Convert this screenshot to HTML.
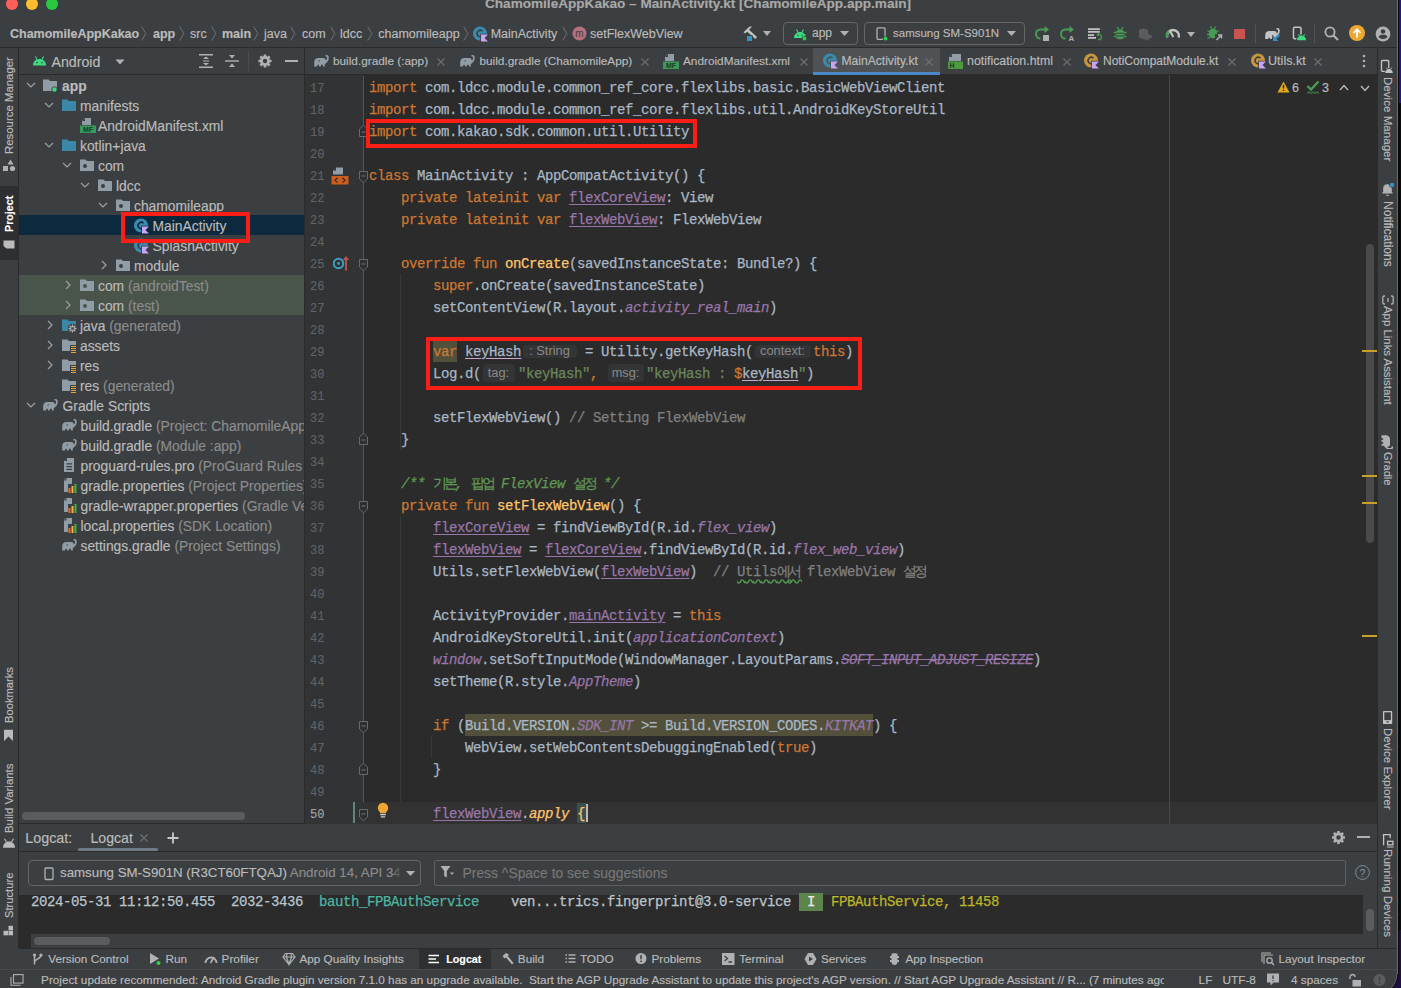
<!DOCTYPE html>
<html><head><meta charset="utf-8"><title>Android Studio</title>
<style>
html,body{margin:0;padding:0;}
body{width:1401px;height:988px;overflow:hidden;position:relative;background:#3C3F41;font-family:'Liberation Sans', sans-serif;-webkit-text-stroke:0.15px currentColor;}
.c span{white-space:pre}
.c x{display:inline-block;width:8px}
.c x.k{width:11px;text-align:center}
.u x{text-decoration:underline;text-underline-offset:2px}
.ul x{text-decoration:underline;text-decoration-color:#C8A8D0;text-underline-offset:2px}
.lt x{text-decoration:line-through}
.wv x{text-decoration:underline wavy #4E9A4E;text-underline-offset:3px}
</style></head><body>
<div style="position:absolute;left:1397px;top:0px;width:1px;height:988px;background:#6B6B6B;"></div><div style="position:absolute;left:1398px;top:0px;width:3px;height:988px;background:#0A0A0C;"></div><div style="position:absolute;left:1399px;top:0px;width:2px;height:103px;background:#2A1480;"></div><div style="position:absolute;left:1399px;top:930px;width:2px;height:58px;background:#1E0E44;"></div><svg style="position:absolute;left:0px;top:0px;" width="70" height="12" viewBox="0 0 70 12"><circle cx="12" cy="4" r="6" fill="#FF5F57"/><circle cx="32" cy="4" r="6" fill="#FEBC2E"/><circle cx="52" cy="4" r="6" fill="#28C840"/></svg><div style="position:absolute;left:485px;top:-6.30px;height:20px;line-height:20px;font-family:'Liberation Sans', sans-serif;font-size:13.58px;font-weight:700;color:#A8A8A8;white-space:pre;">ChamomileAppKakao – MainActivity.kt [ChamomileApp.app.main]</div><div style="position:absolute;left:0px;top:47px;width:1397px;height:1px;background:#2B2B2B;"></div><div style="position:absolute;left:18px;top:48px;width:1px;height:900px;background:#2B2B2B;"></div><div style="position:absolute;left:19px;top:74px;width:285px;height:1px;background:#2B2B2B;"></div><div style="position:absolute;left:304px;top:48px;width:1px;height:776px;background:#2B2B2B;"></div><div style="position:absolute;left:305px;top:74px;width:1072px;height:1px;background:#2B2B2B;"></div><div style="position:absolute;left:305px;top:75px;width:58px;height:749px;background:#313335;"></div><div style="position:absolute;left:363px;top:75px;width:1014px;height:749px;background:#2B2B2B;"></div><div style="position:absolute;left:363px;top:76px;width:1px;height:748px;background:#555555;"></div><div style="position:absolute;left:1169px;top:75px;width:1px;height:749px;background:#474747;"></div><div style="position:absolute;left:1377px;top:48px;width:1px;height:900px;background:#2B2B2B;"></div><div style="position:absolute;left:19px;top:823px;width:285px;height:1px;background:#2B2B2B;"></div><div style="position:absolute;left:19px;top:851px;width:1358px;height:1px;background:#2B2B2B;"></div><div style="position:absolute;left:19px;top:895px;width:1344px;height:39px;background:#2B2B2B;"></div><div style="position:absolute;left:19px;top:934px;width:12px;height:14px;background:#2B2B2B;"></div><div style="position:absolute;left:19px;top:948px;width:1378px;height:1px;background:#2B2B2B;"></div><div style="position:absolute;left:0px;top:969px;width:1397px;height:1px;background:#4A4A4A;"></div><div style="position:absolute;left:305px;top:802px;width:1072px;height:22px;background:#323232;"></div><div style="position:absolute;left:305px;top:802px;width:58px;height:22px;background:#313335;"></div><div style="position:absolute;left:1169px;top:802px;width:1px;height:22px;background:#4A4A4A;"></div><div style="position:absolute;left:433px;top:341px;width:24px;height:21px;background:#52503A;"></div><div style="position:absolute;left:465px;top:714px;width:408px;height:22px;background:#52503A;"></div><div style="position:absolute;left:577px;top:803px;width:9px;height:20px;background:#3B514D;"></div><div style="position:absolute;left:586px;top:804px;width:2px;height:18px;background:#BBBBBB;"></div><div style="position:absolute;left:400px;top:274px;width:1px;height:176px;background:#383838;"></div><div style="position:absolute;left:400px;top:516px;width:1px;height:286px;background:#383838;"></div><div style="position:absolute;left:431px;top:736px;width:1px;height:22px;background:#383838;"></div><div style="position:absolute;left:310px;top:78px;height:22px;line-height:22px;font-family:'Liberation Mono', monospace;font-size:12px;color:#606366;white-space:pre">17</div><div class="c" style="position:absolute;left:369px;top:76.5px;height:22px;line-height:22px;font-family:'Liberation Mono', monospace;font-size:14px;-webkit-text-stroke:0.25px currentColor;color:#A9B7C6;white-space:pre"><span style="color:#CC7832"><x>i</x><x>m</x><x>p</x><x>o</x><x>r</x><x>t</x></span><span style="color:#A9B7C6"><x> </x><x>c</x><x>o</x><x>m</x><x>.</x><x>l</x><x>d</x><x>c</x><x>c</x><x>.</x><x>m</x><x>o</x><x>d</x><x>u</x><x>l</x><x>e</x><x>.</x><x>c</x><x>o</x><x>m</x><x>m</x><x>o</x><x>n</x><x>_</x><x>r</x><x>e</x><x>f</x><x>_</x><x>c</x><x>o</x><x>r</x><x>e</x><x>.</x><x>f</x><x>l</x><x>e</x><x>x</x><x>l</x><x>i</x><x>b</x><x>s</x><x>.</x><x>b</x><x>a</x><x>s</x><x>i</x><x>c</x><x>.</x><x>B</x><x>a</x><x>s</x><x>i</x><x>c</x><x>W</x><x>e</x><x>b</x><x>V</x><x>i</x><x>e</x><x>w</x><x>C</x><x>l</x><x>i</x><x>e</x><x>n</x><x>t</x></span></div><div style="position:absolute;left:310px;top:100px;height:22px;line-height:22px;font-family:'Liberation Mono', monospace;font-size:12px;color:#606366;white-space:pre">18</div><div class="c" style="position:absolute;left:369px;top:98.5px;height:22px;line-height:22px;font-family:'Liberation Mono', monospace;font-size:14px;-webkit-text-stroke:0.25px currentColor;color:#A9B7C6;white-space:pre"><span style="color:#CC7832"><x>i</x><x>m</x><x>p</x><x>o</x><x>r</x><x>t</x></span><span style="color:#A9B7C6"><x> </x><x>c</x><x>o</x><x>m</x><x>.</x><x>l</x><x>d</x><x>c</x><x>c</x><x>.</x><x>m</x><x>o</x><x>d</x><x>u</x><x>l</x><x>e</x><x>.</x><x>c</x><x>o</x><x>m</x><x>m</x><x>o</x><x>n</x><x>_</x><x>r</x><x>e</x><x>f</x><x>_</x><x>c</x><x>o</x><x>r</x><x>e</x><x>.</x><x>f</x><x>l</x><x>e</x><x>x</x><x>l</x><x>i</x><x>b</x><x>s</x><x>.</x><x>u</x><x>t</x><x>i</x><x>l</x><x>.</x><x>A</x><x>n</x><x>d</x><x>r</x><x>o</x><x>i</x><x>d</x><x>K</x><x>e</x><x>y</x><x>S</x><x>t</x><x>o</x><x>r</x><x>e</x><x>U</x><x>t</x><x>i</x><x>l</x></span></div><div style="position:absolute;left:310px;top:122px;height:22px;line-height:22px;font-family:'Liberation Mono', monospace;font-size:12px;color:#606366;white-space:pre">19</div><div class="c" style="position:absolute;left:369px;top:120.5px;height:22px;line-height:22px;font-family:'Liberation Mono', monospace;font-size:14px;-webkit-text-stroke:0.25px currentColor;color:#A9B7C6;white-space:pre"><span style="color:#CC7832"><x>i</x><x>m</x><x>p</x><x>o</x><x>r</x><x>t</x></span><span style="color:#A9B7C6"><x> </x><x>c</x><x>o</x><x>m</x><x>.</x><x>k</x><x>a</x><x>k</x><x>a</x><x>o</x><x>.</x><x>s</x><x>d</x><x>k</x><x>.</x><x>c</x><x>o</x><x>m</x><x>m</x><x>o</x><x>n</x><x>.</x><x>u</x><x>t</x><x>i</x><x>l</x><x>.</x><x>U</x><x>t</x><x>i</x><x>l</x><x>i</x><x>t</x><x>y</x></span></div><div style="position:absolute;left:310px;top:144px;height:22px;line-height:22px;font-family:'Liberation Mono', monospace;font-size:12px;color:#606366;white-space:pre">20</div><div style="position:absolute;left:310px;top:166px;height:22px;line-height:22px;font-family:'Liberation Mono', monospace;font-size:12px;color:#606366;white-space:pre">21</div><div class="c" style="position:absolute;left:369px;top:164.5px;height:22px;line-height:22px;font-family:'Liberation Mono', monospace;font-size:14px;-webkit-text-stroke:0.25px currentColor;color:#A9B7C6;white-space:pre"><span style="color:#CC7832"><x>c</x><x>l</x><x>a</x><x>s</x><x>s</x></span><span style="color:#A9B7C6"><x> </x><x>M</x><x>a</x><x>i</x><x>n</x><x>A</x><x>c</x><x>t</x><x>i</x><x>v</x><x>i</x><x>t</x><x>y</x><x> </x><x>:</x><x> </x><x>A</x><x>p</x><x>p</x><x>C</x><x>o</x><x>m</x><x>p</x><x>a</x><x>t</x><x>A</x><x>c</x><x>t</x><x>i</x><x>v</x><x>i</x><x>t</x><x>y</x><x>(</x><x>)</x><x> </x><x>{</x></span></div><div style="position:absolute;left:310px;top:188px;height:22px;line-height:22px;font-family:'Liberation Mono', monospace;font-size:12px;color:#606366;white-space:pre">22</div><div class="c" style="position:absolute;left:369px;top:186.5px;height:22px;line-height:22px;font-family:'Liberation Mono', monospace;font-size:14px;-webkit-text-stroke:0.25px currentColor;color:#A9B7C6;white-space:pre"><span style="color:#CC7832"><x> </x><x> </x><x> </x><x> </x><x>p</x><x>r</x><x>i</x><x>v</x><x>a</x><x>t</x><x>e</x><x> </x><x>l</x><x>a</x><x>t</x><x>e</x><x>i</x><x>n</x><x>i</x><x>t</x><x> </x><x>v</x><x>a</x><x>r</x></span><span style="color:#A9B7C6"><x> </x></span><span style="color:#9876AA" class="u"><x>f</x><x>l</x><x>e</x><x>x</x><x>C</x><x>o</x><x>r</x><x>e</x><x>V</x><x>i</x><x>e</x><x>w</x></span><span style="color:#A9B7C6"><x>:</x><x> </x><x>V</x><x>i</x><x>e</x><x>w</x></span></div><div style="position:absolute;left:310px;top:210px;height:22px;line-height:22px;font-family:'Liberation Mono', monospace;font-size:12px;color:#606366;white-space:pre">23</div><div class="c" style="position:absolute;left:369px;top:208.5px;height:22px;line-height:22px;font-family:'Liberation Mono', monospace;font-size:14px;-webkit-text-stroke:0.25px currentColor;color:#A9B7C6;white-space:pre"><span style="color:#CC7832"><x> </x><x> </x><x> </x><x> </x><x>p</x><x>r</x><x>i</x><x>v</x><x>a</x><x>t</x><x>e</x><x> </x><x>l</x><x>a</x><x>t</x><x>e</x><x>i</x><x>n</x><x>i</x><x>t</x><x> </x><x>v</x><x>a</x><x>r</x></span><span style="color:#A9B7C6"><x> </x></span><span style="color:#9876AA" class="u"><x>f</x><x>l</x><x>e</x><x>x</x><x>W</x><x>e</x><x>b</x><x>V</x><x>i</x><x>e</x><x>w</x></span><span style="color:#A9B7C6"><x>:</x><x> </x><x>F</x><x>l</x><x>e</x><x>x</x><x>W</x><x>e</x><x>b</x><x>V</x><x>i</x><x>e</x><x>w</x></span></div><div style="position:absolute;left:310px;top:232px;height:22px;line-height:22px;font-family:'Liberation Mono', monospace;font-size:12px;color:#606366;white-space:pre">24</div><div style="position:absolute;left:310px;top:254px;height:22px;line-height:22px;font-family:'Liberation Mono', monospace;font-size:12px;color:#606366;white-space:pre">25</div><div class="c" style="position:absolute;left:369px;top:252.5px;height:22px;line-height:22px;font-family:'Liberation Mono', monospace;font-size:14px;-webkit-text-stroke:0.25px currentColor;color:#A9B7C6;white-space:pre"><span style="color:#CC7832"><x> </x><x> </x><x> </x><x> </x><x>o</x><x>v</x><x>e</x><x>r</x><x>r</x><x>i</x><x>d</x><x>e</x><x> </x><x>f</x><x>u</x><x>n</x></span><span style="color:#A9B7C6"><x> </x></span><span style="color:#FFC66D"><x>o</x><x>n</x><x>C</x><x>r</x><x>e</x><x>a</x><x>t</x><x>e</x></span><span style="color:#A9B7C6"><x>(</x><x>s</x><x>a</x><x>v</x><x>e</x><x>d</x><x>I</x><x>n</x><x>s</x><x>t</x><x>a</x><x>n</x><x>c</x><x>e</x><x>S</x><x>t</x><x>a</x><x>t</x><x>e</x><x>:</x><x> </x><x>B</x><x>u</x><x>n</x><x>d</x><x>l</x><x>e</x><x>?</x><x>)</x><x> </x><x>{</x></span></div><div style="position:absolute;left:310px;top:276px;height:22px;line-height:22px;font-family:'Liberation Mono', monospace;font-size:12px;color:#606366;white-space:pre">26</div><div class="c" style="position:absolute;left:369px;top:274.5px;height:22px;line-height:22px;font-family:'Liberation Mono', monospace;font-size:14px;-webkit-text-stroke:0.25px currentColor;color:#A9B7C6;white-space:pre"><span style="color:#A9B7C6"><x> </x><x> </x><x> </x><x> </x><x> </x><x> </x><x> </x><x> </x></span><span style="color:#CC7832"><x>s</x><x>u</x><x>p</x><x>e</x><x>r</x></span><span style="color:#A9B7C6"><x>.</x><x>o</x><x>n</x><x>C</x><x>r</x><x>e</x><x>a</x><x>t</x><x>e</x><x>(</x><x>s</x><x>a</x><x>v</x><x>e</x><x>d</x><x>I</x><x>n</x><x>s</x><x>t</x><x>a</x><x>n</x><x>c</x><x>e</x><x>S</x><x>t</x><x>a</x><x>t</x><x>e</x><x>)</x></span></div><div style="position:absolute;left:310px;top:298px;height:22px;line-height:22px;font-family:'Liberation Mono', monospace;font-size:12px;color:#606366;white-space:pre">27</div><div class="c" style="position:absolute;left:369px;top:296.5px;height:22px;line-height:22px;font-family:'Liberation Mono', monospace;font-size:14px;-webkit-text-stroke:0.25px currentColor;color:#A9B7C6;white-space:pre"><span style="color:#A9B7C6"><x> </x><x> </x><x> </x><x> </x><x> </x><x> </x><x> </x><x> </x><x>s</x><x>e</x><x>t</x><x>C</x><x>o</x><x>n</x><x>t</x><x>e</x><x>n</x><x>t</x><x>V</x><x>i</x><x>e</x><x>w</x><x>(</x><x>R</x><x>.</x><x>l</x><x>a</x><x>y</x><x>o</x><x>u</x><x>t</x><x>.</x></span><span style="color:#9876AA;font-style:italic"><x>a</x><x>c</x><x>t</x><x>i</x><x>v</x><x>i</x><x>t</x><x>y</x><x>_</x><x>r</x><x>e</x><x>a</x><x>l</x><x>_</x><x>m</x><x>a</x><x>i</x><x>n</x></span><span style="color:#A9B7C6"><x>)</x></span></div><div style="position:absolute;left:310px;top:320px;height:22px;line-height:22px;font-family:'Liberation Mono', monospace;font-size:12px;color:#606366;white-space:pre">28</div><div style="position:absolute;left:310px;top:342px;height:22px;line-height:22px;font-family:'Liberation Mono', monospace;font-size:12px;color:#606366;white-space:pre">29</div><div class="c" style="position:absolute;left:369px;top:340.5px;height:22px;line-height:22px;font-family:'Liberation Mono', monospace;font-size:14px;-webkit-text-stroke:0.25px currentColor;color:#A9B7C6;white-space:pre"><span style="color:#A9B7C6"><x> </x><x> </x><x> </x><x> </x><x> </x><x> </x><x> </x><x> </x></span><span style="color:#CC7832"><x>v</x><x>a</x><x>r</x></span><span style="color:#A9B7C6"><x> </x></span><span style="color:#A9B7C6" class="ul"><x>k</x><x>e</x><x>y</x><x>H</x><x>a</x><x>s</x><x>h</x></span><span style="display:inline-block;width:56px;height:14px;position:relative;vertical-align:top;-webkit-text-stroke:0"><span style="position:absolute;left:1.5px;top:4.5px;width:54px;height:13px;border-radius:4px;background:#333435"></span><span style="position:absolute;left:1.5px;width:54px;top:3px;line-height:14px;text-align:center;font-family:'Liberation Sans', sans-serif;font-size:12.8px;letter-spacing:0;color:#8A8A8A;white-space:pre">: String</span></span><span style="color:#A9B7C6"><x> </x><x>=</x><x> </x><x>U</x><x>t</x><x>i</x><x>l</x><x>i</x><x>t</x><x>y</x><x>.</x><x>g</x><x>e</x><x>t</x><x>K</x><x>e</x><x>y</x><x>H</x><x>a</x><x>s</x><x>h</x><x>(</x></span><span style="display:inline-block;width:60px;height:14px;position:relative;vertical-align:top;-webkit-text-stroke:0"><span style="position:absolute;left:1.5px;top:4.5px;width:56px;height:13px;border-radius:4px;background:#333435"></span><span style="position:absolute;left:1.5px;width:56px;top:3px;line-height:14px;text-align:center;font-family:'Liberation Sans', sans-serif;font-size:12.8px;letter-spacing:0;color:#8A8A8A;white-space:pre">context:</span></span><span style="color:#CC7832"><x>t</x><x>h</x><x>i</x><x>s</x></span><span style="color:#A9B7C6"><x>)</x></span></div><div style="position:absolute;left:310px;top:364px;height:22px;line-height:22px;font-family:'Liberation Mono', monospace;font-size:12px;color:#606366;white-space:pre">30</div><div class="c" style="position:absolute;left:369px;top:362.5px;height:22px;line-height:22px;font-family:'Liberation Mono', monospace;font-size:14px;-webkit-text-stroke:0.25px currentColor;color:#A9B7C6;white-space:pre"><span style="color:#A9B7C6"><x> </x><x> </x><x> </x><x> </x><x> </x><x> </x><x> </x><x> </x><x>L</x><x>o</x><x>g</x><x>.</x><x>d</x><x>(</x></span><span style="display:inline-block;width:37px;height:14px;position:relative;vertical-align:top;-webkit-text-stroke:0"><span style="position:absolute;left:1.5px;top:1.5px;width:32px;height:18px;border-radius:4px;background:#333435"></span><span style="position:absolute;left:1.5px;width:32px;top:3px;line-height:14px;text-align:center;font-family:'Liberation Sans', sans-serif;font-size:12.8px;letter-spacing:0;color:#8A8A8A;white-space:pre">tag:</span></span><span style="color:#6A8759"><x>&quot;</x><x>k</x><x>e</x><x>y</x><x>H</x><x>a</x><x>s</x><x>h</x><x>&quot;</x></span><span style="color:#CC7832"><x>,</x><x> </x></span><span style="display:inline-block;width:40px;height:14px;position:relative;vertical-align:top;-webkit-text-stroke:0"><span style="position:absolute;left:1.5px;top:1.5px;width:36px;height:18px;border-radius:4px;background:#333435"></span><span style="position:absolute;left:1.5px;width:36px;top:3px;line-height:14px;text-align:center;font-family:'Liberation Sans', sans-serif;font-size:12.8px;letter-spacing:0;color:#8A8A8A;white-space:pre">msg:</span></span><span style="color:#6A8759"><x>&quot;</x><x>k</x><x>e</x><x>y</x><x>H</x><x>a</x><x>s</x><x>h</x><x> </x><x>:</x><x> </x></span><span style="color:#CC7832"><x>$</x></span><span style="color:#A9B7C6" class="ul"><x>k</x><x>e</x><x>y</x><x>H</x><x>a</x><x>s</x><x>h</x></span><span style="color:#6A8759"><x>&quot;</x></span><span style="color:#A9B7C6"><x>)</x></span></div><div style="position:absolute;left:310px;top:386px;height:22px;line-height:22px;font-family:'Liberation Mono', monospace;font-size:12px;color:#606366;white-space:pre">31</div><div style="position:absolute;left:310px;top:408px;height:22px;line-height:22px;font-family:'Liberation Mono', monospace;font-size:12px;color:#606366;white-space:pre">32</div><div class="c" style="position:absolute;left:369px;top:406.5px;height:22px;line-height:22px;font-family:'Liberation Mono', monospace;font-size:14px;-webkit-text-stroke:0.25px currentColor;color:#A9B7C6;white-space:pre"><span style="color:#A9B7C6"><x> </x><x> </x><x> </x><x> </x><x> </x><x> </x><x> </x><x> </x><x>s</x><x>e</x><x>t</x><x>F</x><x>l</x><x>e</x><x>x</x><x>W</x><x>e</x><x>b</x><x>V</x><x>i</x><x>e</x><x>w</x><x>(</x><x>)</x><x> </x></span><span style="color:#808080"><x>/</x><x>/</x><x> </x><x>S</x><x>e</x><x>t</x><x>t</x><x>i</x><x>n</x><x>g</x><x> </x><x>F</x><x>l</x><x>e</x><x>x</x><x>W</x><x>e</x><x>b</x><x>V</x><x>i</x><x>e</x><x>w</x></span></div><div style="position:absolute;left:310px;top:430px;height:22px;line-height:22px;font-family:'Liberation Mono', monospace;font-size:12px;color:#606366;white-space:pre">33</div><div class="c" style="position:absolute;left:369px;top:428.5px;height:22px;line-height:22px;font-family:'Liberation Mono', monospace;font-size:14px;-webkit-text-stroke:0.25px currentColor;color:#A9B7C6;white-space:pre"><span style="color:#A9B7C6"><x> </x><x> </x><x> </x><x> </x><x>}</x></span></div><div style="position:absolute;left:310px;top:452px;height:22px;line-height:22px;font-family:'Liberation Mono', monospace;font-size:12px;color:#606366;white-space:pre">34</div><div style="position:absolute;left:310px;top:474px;height:22px;line-height:22px;font-family:'Liberation Mono', monospace;font-size:12px;color:#606366;white-space:pre">35</div><div class="c" style="position:absolute;left:369px;top:472.5px;height:22px;line-height:22px;font-family:'Liberation Mono', monospace;font-size:14px;-webkit-text-stroke:0.25px currentColor;color:#A9B7C6;white-space:pre"><span style="color:#A9B7C6"><x> </x><x> </x><x> </x><x> </x></span><span style="color:#629755;font-style:italic"><x>/</x><x>*</x><x>*</x><x> </x></span><span style="color:#629755;font-style:italic;font-style:normal"><x class="k">기</x><x class="k">본</x></span><span style="color:#629755;font-style:italic"><x>,</x><x> </x></span><span style="color:#629755;font-style:italic;font-style:normal"><x class="k">팝</x><x class="k">업</x></span><span style="color:#629755;font-style:italic"><x> </x><x>F</x><x>l</x><x>e</x><x>x</x><x>V</x><x>i</x><x>e</x><x>w</x><x> </x></span><span style="color:#629755;font-style:italic;font-style:normal"><x class="k">설</x><x class="k">정</x></span><span style="color:#629755;font-style:italic"><x> </x><x>*</x><x>/</x></span></div><div style="position:absolute;left:310px;top:496px;height:22px;line-height:22px;font-family:'Liberation Mono', monospace;font-size:12px;color:#606366;white-space:pre">36</div><div class="c" style="position:absolute;left:369px;top:494.5px;height:22px;line-height:22px;font-family:'Liberation Mono', monospace;font-size:14px;-webkit-text-stroke:0.25px currentColor;color:#A9B7C6;white-space:pre"><span style="color:#CC7832"><x> </x><x> </x><x> </x><x> </x><x>p</x><x>r</x><x>i</x><x>v</x><x>a</x><x>t</x><x>e</x><x> </x><x>f</x><x>u</x><x>n</x></span><span style="color:#A9B7C6"><x> </x></span><span style="color:#FFC66D"><x>s</x><x>e</x><x>t</x><x>F</x><x>l</x><x>e</x><x>x</x><x>W</x><x>e</x><x>b</x><x>V</x><x>i</x><x>e</x><x>w</x></span><span style="color:#A9B7C6"><x>(</x><x>)</x><x> </x><x>{</x></span></div><div style="position:absolute;left:310px;top:518px;height:22px;line-height:22px;font-family:'Liberation Mono', monospace;font-size:12px;color:#606366;white-space:pre">37</div><div class="c" style="position:absolute;left:369px;top:516.5px;height:22px;line-height:22px;font-family:'Liberation Mono', monospace;font-size:14px;-webkit-text-stroke:0.25px currentColor;color:#A9B7C6;white-space:pre"><span style="color:#A9B7C6"><x> </x><x> </x><x> </x><x> </x><x> </x><x> </x><x> </x><x> </x></span><span style="color:#9876AA" class="u"><x>f</x><x>l</x><x>e</x><x>x</x><x>C</x><x>o</x><x>r</x><x>e</x><x>V</x><x>i</x><x>e</x><x>w</x></span><span style="color:#A9B7C6"><x> </x><x>=</x><x> </x><x>f</x><x>i</x><x>n</x><x>d</x><x>V</x><x>i</x><x>e</x><x>w</x><x>B</x><x>y</x><x>I</x><x>d</x><x>(</x><x>R</x><x>.</x><x>i</x><x>d</x><x>.</x></span><span style="color:#9876AA;font-style:italic"><x>f</x><x>l</x><x>e</x><x>x</x><x>_</x><x>v</x><x>i</x><x>e</x><x>w</x></span><span style="color:#A9B7C6"><x>)</x></span></div><div style="position:absolute;left:310px;top:540px;height:22px;line-height:22px;font-family:'Liberation Mono', monospace;font-size:12px;color:#606366;white-space:pre">38</div><div class="c" style="position:absolute;left:369px;top:538.5px;height:22px;line-height:22px;font-family:'Liberation Mono', monospace;font-size:14px;-webkit-text-stroke:0.25px currentColor;color:#A9B7C6;white-space:pre"><span style="color:#A9B7C6"><x> </x><x> </x><x> </x><x> </x><x> </x><x> </x><x> </x><x> </x></span><span style="color:#9876AA" class="u"><x>f</x><x>l</x><x>e</x><x>x</x><x>W</x><x>e</x><x>b</x><x>V</x><x>i</x><x>e</x><x>w</x></span><span style="color:#A9B7C6"><x> </x><x>=</x><x> </x></span><span style="color:#9876AA" class="u"><x>f</x><x>l</x><x>e</x><x>x</x><x>C</x><x>o</x><x>r</x><x>e</x><x>V</x><x>i</x><x>e</x><x>w</x></span><span style="color:#A9B7C6"><x>.</x><x>f</x><x>i</x><x>n</x><x>d</x><x>V</x><x>i</x><x>e</x><x>w</x><x>B</x><x>y</x><x>I</x><x>d</x><x>(</x><x>R</x><x>.</x><x>i</x><x>d</x><x>.</x></span><span style="color:#9876AA;font-style:italic"><x>f</x><x>l</x><x>e</x><x>x</x><x>_</x><x>w</x><x>e</x><x>b</x><x>_</x><x>v</x><x>i</x><x>e</x><x>w</x></span><span style="color:#A9B7C6"><x>)</x></span></div><div style="position:absolute;left:310px;top:562px;height:22px;line-height:22px;font-family:'Liberation Mono', monospace;font-size:12px;color:#606366;white-space:pre">39</div><div class="c" style="position:absolute;left:369px;top:560.5px;height:22px;line-height:22px;font-family:'Liberation Mono', monospace;font-size:14px;-webkit-text-stroke:0.25px currentColor;color:#A9B7C6;white-space:pre"><span style="color:#A9B7C6"><x> </x><x> </x><x> </x><x> </x><x> </x><x> </x><x> </x><x> </x><x>U</x><x>t</x><x>i</x><x>l</x><x>s</x><x>.</x><x>s</x><x>e</x><x>t</x><x>F</x><x>l</x><x>e</x><x>x</x><x>W</x><x>e</x><x>b</x><x>V</x><x>i</x><x>e</x><x>w</x><x>(</x></span><span style="color:#9876AA" class="u"><x>f</x><x>l</x><x>e</x><x>x</x><x>W</x><x>e</x><x>b</x><x>V</x><x>i</x><x>e</x><x>w</x></span><span style="color:#A9B7C6"><x>)</x><x> </x><x> </x></span><span style="color:#808080"><x>/</x><x>/</x><x> </x></span><span style="color:#808080" class="wv"><x>U</x><x>t</x><x>i</x><x>l</x><x>s</x></span><span style="color:#808080;font-style:normal" class="wv"><x class="k">에</x><x class="k">서</x></span><span style="color:#808080"><x> </x><x>f</x><x>l</x><x>e</x><x>x</x><x>W</x><x>e</x><x>b</x><x>V</x><x>i</x><x>e</x><x>w</x><x> </x></span><span style="color:#808080;font-style:normal"><x class="k">설</x><x class="k">정</x></span></div><div style="position:absolute;left:310px;top:584px;height:22px;line-height:22px;font-family:'Liberation Mono', monospace;font-size:12px;color:#606366;white-space:pre">40</div><div style="position:absolute;left:310px;top:606px;height:22px;line-height:22px;font-family:'Liberation Mono', monospace;font-size:12px;color:#606366;white-space:pre">41</div><div class="c" style="position:absolute;left:369px;top:604.5px;height:22px;line-height:22px;font-family:'Liberation Mono', monospace;font-size:14px;-webkit-text-stroke:0.25px currentColor;color:#A9B7C6;white-space:pre"><span style="color:#A9B7C6"><x> </x><x> </x><x> </x><x> </x><x> </x><x> </x><x> </x><x> </x><x>A</x><x>c</x><x>t</x><x>i</x><x>v</x><x>i</x><x>t</x><x>y</x><x>P</x><x>r</x><x>o</x><x>v</x><x>i</x><x>d</x><x>e</x><x>r</x><x>.</x></span><span style="color:#9876AA" class="u"><x>m</x><x>a</x><x>i</x><x>n</x><x>A</x><x>c</x><x>t</x><x>i</x><x>v</x><x>i</x><x>t</x><x>y</x></span><span style="color:#A9B7C6"><x> </x><x>=</x><x> </x></span><span style="color:#CC7832"><x>t</x><x>h</x><x>i</x><x>s</x></span></div><div style="position:absolute;left:310px;top:628px;height:22px;line-height:22px;font-family:'Liberation Mono', monospace;font-size:12px;color:#606366;white-space:pre">42</div><div class="c" style="position:absolute;left:369px;top:626.5px;height:22px;line-height:22px;font-family:'Liberation Mono', monospace;font-size:14px;-webkit-text-stroke:0.25px currentColor;color:#A9B7C6;white-space:pre"><span style="color:#A9B7C6"><x> </x><x> </x><x> </x><x> </x><x> </x><x> </x><x> </x><x> </x><x>A</x><x>n</x><x>d</x><x>r</x><x>o</x><x>i</x><x>d</x><x>K</x><x>e</x><x>y</x><x>S</x><x>t</x><x>o</x><x>r</x><x>e</x><x>U</x><x>t</x><x>i</x><x>l</x><x>.</x><x>i</x><x>n</x><x>i</x><x>t</x><x>(</x></span><span style="color:#9876AA;font-style:italic"><x>a</x><x>p</x><x>p</x><x>l</x><x>i</x><x>c</x><x>a</x><x>t</x><x>i</x><x>o</x><x>n</x><x>C</x><x>o</x><x>n</x><x>t</x><x>e</x><x>x</x><x>t</x></span><span style="color:#A9B7C6"><x>)</x></span></div><div style="position:absolute;left:310px;top:650px;height:22px;line-height:22px;font-family:'Liberation Mono', monospace;font-size:12px;color:#606366;white-space:pre">43</div><div class="c" style="position:absolute;left:369px;top:648.5px;height:22px;line-height:22px;font-family:'Liberation Mono', monospace;font-size:14px;-webkit-text-stroke:0.25px currentColor;color:#A9B7C6;white-space:pre"><span style="color:#A9B7C6"><x> </x><x> </x><x> </x><x> </x><x> </x><x> </x><x> </x><x> </x></span><span style="color:#9876AA;font-style:italic"><x>w</x><x>i</x><x>n</x><x>d</x><x>o</x><x>w</x></span><span style="color:#A9B7C6"><x>.</x><x>s</x><x>e</x><x>t</x><x>S</x><x>o</x><x>f</x><x>t</x><x>I</x><x>n</x><x>p</x><x>u</x><x>t</x><x>M</x><x>o</x><x>d</x><x>e</x><x>(</x><x>W</x><x>i</x><x>n</x><x>d</x><x>o</x><x>w</x><x>M</x><x>a</x><x>n</x><x>a</x><x>g</x><x>e</x><x>r</x><x>.</x><x>L</x><x>a</x><x>y</x><x>o</x><x>u</x><x>t</x><x>P</x><x>a</x><x>r</x><x>a</x><x>m</x><x>s</x><x>.</x></span><span style="color:#9876AA;font-style:italic" class="lt"><x>S</x><x>O</x><x>F</x><x>T</x><x>_</x><x>I</x><x>N</x><x>P</x><x>U</x><x>T</x><x>_</x><x>A</x><x>D</x><x>J</x><x>U</x><x>S</x><x>T</x><x>_</x><x>R</x><x>E</x><x>S</x><x>I</x><x>Z</x><x>E</x></span><span style="color:#A9B7C6"><x>)</x></span></div><div style="position:absolute;left:310px;top:672px;height:22px;line-height:22px;font-family:'Liberation Mono', monospace;font-size:12px;color:#606366;white-space:pre">44</div><div class="c" style="position:absolute;left:369px;top:670.5px;height:22px;line-height:22px;font-family:'Liberation Mono', monospace;font-size:14px;-webkit-text-stroke:0.25px currentColor;color:#A9B7C6;white-space:pre"><span style="color:#A9B7C6"><x> </x><x> </x><x> </x><x> </x><x> </x><x> </x><x> </x><x> </x><x>s</x><x>e</x><x>t</x><x>T</x><x>h</x><x>e</x><x>m</x><x>e</x><x>(</x><x>R</x><x>.</x><x>s</x><x>t</x><x>y</x><x>l</x><x>e</x><x>.</x></span><span style="color:#9876AA;font-style:italic"><x>A</x><x>p</x><x>p</x><x>T</x><x>h</x><x>e</x><x>m</x><x>e</x></span><span style="color:#A9B7C6"><x>)</x></span></div><div style="position:absolute;left:310px;top:694px;height:22px;line-height:22px;font-family:'Liberation Mono', monospace;font-size:12px;color:#606366;white-space:pre">45</div><div style="position:absolute;left:310px;top:716px;height:22px;line-height:22px;font-family:'Liberation Mono', monospace;font-size:12px;color:#606366;white-space:pre">46</div><div class="c" style="position:absolute;left:369px;top:714.5px;height:22px;line-height:22px;font-family:'Liberation Mono', monospace;font-size:14px;-webkit-text-stroke:0.25px currentColor;color:#A9B7C6;white-space:pre"><span style="color:#A9B7C6"><x> </x><x> </x><x> </x><x> </x><x> </x><x> </x><x> </x><x> </x></span><span style="color:#CC7832"><x>i</x><x>f</x></span><span style="color:#A9B7C6"><x> </x><x>(</x></span><span style="color:#A9B7C6"><x>B</x><x>u</x><x>i</x><x>l</x><x>d</x><x>.</x><x>V</x><x>E</x><x>R</x><x>S</x><x>I</x><x>O</x><x>N</x><x>.</x></span><span style="color:#9876AA;font-style:italic"><x>S</x><x>D</x><x>K</x><x>_</x><x>I</x><x>N</x><x>T</x></span><span style="color:#A9B7C6"><x> </x><x>&gt;</x><x>=</x><x> </x><x>B</x><x>u</x><x>i</x><x>l</x><x>d</x><x>.</x><x>V</x><x>E</x><x>R</x><x>S</x><x>I</x><x>O</x><x>N</x><x>_</x><x>C</x><x>O</x><x>D</x><x>E</x><x>S</x><x>.</x></span><span style="color:#9876AA;font-style:italic"><x>K</x><x>I</x><x>T</x><x>K</x><x>A</x><x>T</x></span><span style="color:#A9B7C6"><x>)</x><x> </x><x>{</x></span></div><div style="position:absolute;left:310px;top:738px;height:22px;line-height:22px;font-family:'Liberation Mono', monospace;font-size:12px;color:#606366;white-space:pre">47</div><div class="c" style="position:absolute;left:369px;top:736.5px;height:22px;line-height:22px;font-family:'Liberation Mono', monospace;font-size:14px;-webkit-text-stroke:0.25px currentColor;color:#A9B7C6;white-space:pre"><span style="color:#A9B7C6"><x> </x><x> </x><x> </x><x> </x><x> </x><x> </x><x> </x><x> </x><x> </x><x> </x><x> </x><x> </x><x>W</x><x>e</x><x>b</x><x>V</x><x>i</x><x>e</x><x>w</x><x>.</x><x>s</x><x>e</x><x>t</x><x>W</x><x>e</x><x>b</x><x>C</x><x>o</x><x>n</x><x>t</x><x>e</x><x>n</x><x>t</x><x>s</x><x>D</x><x>e</x><x>b</x><x>u</x><x>g</x><x>g</x><x>i</x><x>n</x><x>g</x><x>E</x><x>n</x><x>a</x><x>b</x><x>l</x><x>e</x><x>d</x><x>(</x></span><span style="color:#CC7832"><x>t</x><x>r</x><x>u</x><x>e</x></span><span style="color:#A9B7C6"><x>)</x></span></div><div style="position:absolute;left:310px;top:760px;height:22px;line-height:22px;font-family:'Liberation Mono', monospace;font-size:12px;color:#606366;white-space:pre">48</div><div class="c" style="position:absolute;left:369px;top:758.5px;height:22px;line-height:22px;font-family:'Liberation Mono', monospace;font-size:14px;-webkit-text-stroke:0.25px currentColor;color:#A9B7C6;white-space:pre"><span style="color:#A9B7C6"><x> </x><x> </x><x> </x><x> </x><x> </x><x> </x><x> </x><x> </x><x>}</x></span></div><div style="position:absolute;left:310px;top:782px;height:22px;line-height:22px;font-family:'Liberation Mono', monospace;font-size:12px;color:#606366;white-space:pre">49</div><div style="position:absolute;left:310px;top:804px;height:22px;line-height:22px;font-family:'Liberation Mono', monospace;font-size:12px;color:#A4A3A3;white-space:pre">50</div><div class="c" style="position:absolute;left:369px;top:802.5px;height:22px;line-height:22px;font-family:'Liberation Mono', monospace;font-size:14px;-webkit-text-stroke:0.25px currentColor;color:#A9B7C6;white-space:pre"><span style="color:#A9B7C6"><x> </x><x> </x><x> </x><x> </x><x> </x><x> </x><x> </x><x> </x></span><span style="color:#9876AA" class="u"><x>f</x><x>l</x><x>e</x><x>x</x><x>W</x><x>e</x><x>b</x><x>V</x><x>i</x><x>e</x><x>w</x></span><span style="color:#A9B7C6"><x>.</x></span><span style="color:#FFC66D;font-style:italic"><x>a</x><x>p</x><x>p</x><x>l</x><x>y</x></span><span style="color:#A9B7C6"><x> </x></span><span style="color:#FFC66D"><x>{</x></span></div><svg style="position:absolute;left:358px;top:171px;" width="11" height="13" viewBox="0 0 11 13"><path d="M1.5 0.5H9.5V8L5.5 11.8L1.5 8Z" fill="#2D2F30" stroke="#6A6A6A" stroke-width="1"/><path d="M3.5 5H7.5" stroke="#6A6A6A" stroke-width="1.2"/></svg><svg style="position:absolute;left:358px;top:259px;" width="11" height="13" viewBox="0 0 11 13"><path d="M1.5 0.5H9.5V8L5.5 11.8L1.5 8Z" fill="#2D2F30" stroke="#6A6A6A" stroke-width="1"/><path d="M3.5 5H7.5" stroke="#6A6A6A" stroke-width="1.2"/></svg><svg style="position:absolute;left:358px;top:501px;" width="11" height="13" viewBox="0 0 11 13"><path d="M1.5 0.5H9.5V8L5.5 11.8L1.5 8Z" fill="#2D2F30" stroke="#6A6A6A" stroke-width="1"/><path d="M3.5 5H7.5" stroke="#6A6A6A" stroke-width="1.2"/></svg><svg style="position:absolute;left:358px;top:721px;" width="11" height="13" viewBox="0 0 11 13"><path d="M1.5 0.5H9.5V8L5.5 11.8L1.5 8Z" fill="#2D2F30" stroke="#6A6A6A" stroke-width="1"/><path d="M3.5 5H7.5" stroke="#6A6A6A" stroke-width="1.2"/></svg><svg style="position:absolute;left:358px;top:809px;" width="11" height="13" viewBox="0 0 11 13"><path d="M1.5 0.5H9.5V8L5.5 11.8L1.5 8Z" fill="#2D2F30" stroke="#6A6A6A" stroke-width="1"/><path d="M3.5 5H7.5" stroke="#6A6A6A" stroke-width="1.2"/></svg><svg style="position:absolute;left:358px;top:123.5px;" width="11" height="13" viewBox="0 0 11 13"><path d="M1.5 12.5H9.5V5L5.5 1.2L1.5 5Z" fill="#2D2F30" stroke="#6A6A6A" stroke-width="1"/><path d="M3.5 8H7.5" stroke="#6A6A6A" stroke-width="1.2"/></svg><svg style="position:absolute;left:358px;top:431.5px;" width="11" height="13" viewBox="0 0 11 13"><path d="M1.5 12.5H9.5V5L5.5 1.2L1.5 5Z" fill="#2D2F30" stroke="#6A6A6A" stroke-width="1"/><path d="M3.5 8H7.5" stroke="#6A6A6A" stroke-width="1.2"/></svg><svg style="position:absolute;left:358px;top:761.5px;" width="11" height="13" viewBox="0 0 11 13"><path d="M1.5 12.5H9.5V5L5.5 1.2L1.5 5Z" fill="#2D2F30" stroke="#6A6A6A" stroke-width="1"/><path d="M3.5 8H7.5" stroke="#6A6A6A" stroke-width="1.2"/></svg><div style="position:absolute;left:366px;top:119px;width:323px;height:21px;border:4px solid #FB1E16;z-index:50"></div><div style="position:absolute;left:426px;top:337px;width:428px;height:45px;border:4px solid #FB1E16;z-index:50"></div><div style="position:absolute;left:121px;top:212px;width:121px;height:23px;border:4px solid #FB1E16;z-index:50"></div><svg style="position:absolute;left:32px;top:55px;" width="15" height="12" viewBox="0 0 15 12"><path d="M1 10.5C1 6.5 3.8 4 7.5 4C11.2 4 14 6.5 14 10.5Z" fill="#3DDC84"/><path d="M3.5 1.5L5 4.5M11.5 1.5L10 4.5" stroke="#3DDC84" stroke-width="1.1"/><circle cx="5" cy="7.6" r="0.8" fill="#3C3F41"/><circle cx="10" cy="7.6" r="0.8" fill="#3C3F41"/></svg><div style="position:absolute;left:51.5px;top:51.50px;height:20px;line-height:20px;font-family:'Liberation Sans', sans-serif;font-size:14.2px;font-weight:400;color:#BBBBBB;white-space:pre;">Android</div><svg style="position:absolute;left:115px;top:59px;" width="10" height="6" viewBox="0 0 10 6"><path d="M0.5 0.5H9.5L5 5.5Z" fill="#AFB1B3"/></svg><svg style="position:absolute;left:199px;top:54px;" width="14" height="14" viewBox="0 0 14 14"><path d="M0 0.7H14M0 13.3H14" stroke="#AFB1B3" stroke-width="1.4"/><path d="M4 5L7 2.5L10 5Z M4 9L7 11.5L10 9Z" fill="#AFB1B3"/><path d="M4 7H10" stroke="#AFB1B3" stroke-width="1"/></svg><svg style="position:absolute;left:225px;top:54px;" width="14" height="14" viewBox="0 0 14 14"><path d="M0 7H14" stroke="#AFB1B3" stroke-width="1.4"/><path d="M4 1L7 4.5L10 1Z M4 13L7 9.5L10 13Z" fill="#AFB1B3"/></svg><div style="position:absolute;left:248px;top:51px;width:1px;height:20px;background:#4A4D4F;"></div><svg style="position:absolute;left:258px;top:54px;" width="14" height="14" viewBox="0 0 14 14"><g fill="#AFB1B3"><circle cx="7" cy="7" r="5"/><g stroke="#AFB1B3" stroke-width="2.6"><path d="M7 0.5V13.5M0.5 7H13.5M2.4 2.4L11.6 11.6M11.6 2.4L2.4 11.6"/></g></g><circle cx="7" cy="7" r="2.2" fill="#3C3F41"/></svg><div style="position:absolute;left:285px;top:60px;width:13px;height:2px;background:#AFB1B3;"></div><div style="position:absolute;left:19px;top:215px;width:285px;height:20px;background:#0D293E;"></div><div style="position:absolute;left:19px;top:275px;width:285px;height:40px;background:#49544A;"></div><div style="position:absolute;left:19px;top:75px;width:285px;height:735px;overflow:hidden"><svg style="position:absolute;left:7px;top:6px;" width="10" height="8" viewBox="0 0 10 8"><path d="M1 2L5 6L9 2" fill="none" stroke="#9DA0A3" stroke-width="1.2"/></svg><svg style="position:absolute;left:23px;top:2px;" width="16" height="16" viewBox="0 0 16 16"><path d="M1 2.5H6.5L8 4H15V14H1Z" fill="#909DA7"/><circle cx="12.5" cy="12.5" r="3" fill="#3C3F41"/><circle cx="12.5" cy="12.5" r="2.2" fill="#3DD68C"/></svg><div style="position:absolute;left:43px;top:0.5px;height:20px;line-height:20px;font-size:13.85px;color:#BBBBBB;white-space:pre"><b>app</b></div><svg style="position:absolute;left:25px;top:26px;" width="10" height="8" viewBox="0 0 10 8"><path d="M1 2L5 6L9 2" fill="none" stroke="#9DA0A3" stroke-width="1.2"/></svg><svg style="position:absolute;left:42px;top:22px;" width="16" height="16" viewBox="0 0 16 16"><path d="M1 2.5H6.5L8 4H15V14H1Z" fill="#3B87A8"/></svg><div style="position:absolute;left:61px;top:20.5px;height:20px;line-height:20px;font-size:13.85px;color:#BBBBBB;white-space:pre">manifests</div><svg style="position:absolute;left:61px;top:42px;" width="16" height="16" viewBox="0 0 16 16"><path d="M5 1H11V8H2V4Z" fill="#909DA7"/><path d="M2 4H5V1" fill="#3C3F41"/><rect x="0" y="8.5" width="16" height="7.5" fill="#3A9A5E"/><text x="8" y="15" text-anchor="middle" font-family="Liberation Sans" font-size="7" font-weight="700" fill="#1E3A24">MF</text></svg><div style="position:absolute;left:79px;top:40.5px;height:20px;line-height:20px;font-size:13.85px;color:#BBBBBB;white-space:pre">AndroidManifest.xml</div><svg style="position:absolute;left:25px;top:66px;" width="10" height="8" viewBox="0 0 10 8"><path d="M1 2L5 6L9 2" fill="none" stroke="#9DA0A3" stroke-width="1.2"/></svg><svg style="position:absolute;left:42px;top:62px;" width="16" height="16" viewBox="0 0 16 16"><path d="M1 2.5H6.5L8 4H15V14H1Z" fill="#3B87A8"/></svg><div style="position:absolute;left:61px;top:60.5px;height:20px;line-height:20px;font-size:13.85px;color:#BBBBBB;white-space:pre">kotlin+java</div><svg style="position:absolute;left:43px;top:86px;" width="10" height="8" viewBox="0 0 10 8"><path d="M1 2L5 6L9 2" fill="none" stroke="#9DA0A3" stroke-width="1.2"/></svg><svg style="position:absolute;left:60px;top:82px;" width="16" height="16" viewBox="0 0 16 16"><path d="M1 2.5H6.5L8 4H15V14H1Z" fill="#909DA7"/><circle cx="6" cy="9" r="2" fill="#3C3F41"/></svg><div style="position:absolute;left:79px;top:80.5px;height:20px;line-height:20px;font-size:13.85px;color:#BBBBBB;white-space:pre">com</div><svg style="position:absolute;left:61px;top:106px;" width="10" height="8" viewBox="0 0 10 8"><path d="M1 2L5 6L9 2" fill="none" stroke="#9DA0A3" stroke-width="1.2"/></svg><svg style="position:absolute;left:78px;top:102px;" width="16" height="16" viewBox="0 0 16 16"><path d="M1 2.5H6.5L8 4H15V14H1Z" fill="#909DA7"/><circle cx="6" cy="9" r="2" fill="#3C3F41"/></svg><div style="position:absolute;left:97px;top:100.5px;height:20px;line-height:20px;font-size:13.85px;color:#BBBBBB;white-space:pre">ldcc</div><svg style="position:absolute;left:79px;top:126px;" width="10" height="8" viewBox="0 0 10 8"><path d="M1 2L5 6L9 2" fill="none" stroke="#9DA0A3" stroke-width="1.2"/></svg><svg style="position:absolute;left:96px;top:122px;" width="16" height="16" viewBox="0 0 16 16"><path d="M1 2.5H6.5L8 4H15V14H1Z" fill="#909DA7"/><circle cx="6" cy="9" r="2" fill="#3C3F41"/></svg><div style="position:absolute;left:115px;top:120.5px;height:20px;line-height:20px;font-size:13.85px;color:#BBBBBB;white-space:pre">chamomileapp</div><svg style="position:absolute;left:114px;top:142.5px;" width="17" height="17" viewBox="0 0 17 17"><circle cx="8" cy="7.5" r="7" fill="#3A8BB0"/><path d="M10.5 5.2A3.2 3.2 0 1 0 10.5 9.8" fill="none" stroke="#0D293E" stroke-width="1.5"/><path d="M8.2 7.8H17L13.4 11.9L17 16.2H8.2Z" fill="#0D293E"/><path d="M9 8.6H16L12.4 11.9L16 15.4H9Z" fill="#C7A4F5"/></svg><div style="position:absolute;left:133.5px;top:140.5px;height:20px;line-height:20px;font-size:13.85px;color:#BBBBBB;white-space:pre">MainActivity</div><svg style="position:absolute;left:114px;top:162.5px;" width="17" height="17" viewBox="0 0 17 17"><circle cx="8" cy="7.5" r="7" fill="#3A8BB0"/><path d="M10.5 5.2A3.2 3.2 0 1 0 10.5 9.8" fill="none" stroke="#3C3F41" stroke-width="1.5"/><path d="M8.2 7.8H17L13.4 11.9L17 16.2H8.2Z" fill="#3C3F41"/><path d="M9 8.6H16L12.4 11.9L16 15.4H9Z" fill="#C7A4F5"/></svg><div style="position:absolute;left:133.5px;top:160.5px;height:20px;line-height:20px;font-size:13.85px;color:#BBBBBB;white-space:pre">SplashActivity</div><svg style="position:absolute;left:81px;top:185px;" width="8" height="10" viewBox="0 0 8 10"><path d="M2 1L6 5L2 9" fill="none" stroke="#9DA0A3" stroke-width="1.2"/></svg><svg style="position:absolute;left:96px;top:182px;" width="16" height="16" viewBox="0 0 16 16"><path d="M1 2.5H6.5L8 4H15V14H1Z" fill="#909DA7"/><circle cx="6" cy="9" r="2" fill="#3C3F41"/></svg><div style="position:absolute;left:115px;top:180.5px;height:20px;line-height:20px;font-size:13.85px;color:#BBBBBB;white-space:pre">module</div><svg style="position:absolute;left:45px;top:205px;" width="8" height="10" viewBox="0 0 8 10"><path d="M2 1L6 5L2 9" fill="none" stroke="#9DA0A3" stroke-width="1.2"/></svg><svg style="position:absolute;left:60px;top:202px;" width="16" height="16" viewBox="0 0 16 16"><path d="M1 2.5H6.5L8 4H15V14H1Z" fill="#909DA7"/><circle cx="6" cy="9" r="2" fill="#49544A"/></svg><div style="position:absolute;left:79px;top:200.5px;height:20px;line-height:20px;font-size:13.85px;color:#BBBBBB;white-space:pre">com<span style="color:#8C8C8C"> (androidTest)</span></div><svg style="position:absolute;left:45px;top:225px;" width="8" height="10" viewBox="0 0 8 10"><path d="M2 1L6 5L2 9" fill="none" stroke="#9DA0A3" stroke-width="1.2"/></svg><svg style="position:absolute;left:60px;top:222px;" width="16" height="16" viewBox="0 0 16 16"><path d="M1 2.5H6.5L8 4H15V14H1Z" fill="#909DA7"/><circle cx="6" cy="9" r="2" fill="#49544A"/></svg><div style="position:absolute;left:79px;top:220.5px;height:20px;line-height:20px;font-size:13.85px;color:#BBBBBB;white-space:pre">com<span style="color:#8C8C8C"> (test)</span></div><svg style="position:absolute;left:27px;top:245px;" width="8" height="10" viewBox="0 0 8 10"><path d="M2 1L6 5L2 9" fill="none" stroke="#9DA0A3" stroke-width="1.2"/></svg><svg style="position:absolute;left:42px;top:242px;" width="16" height="16" viewBox="0 0 16 16"><path d="M1 2.5H6.5L8 4H15V14H1Z" fill="#3B87A8"/><circle cx="11.5" cy="11.5" r="4.8" fill="#3C3F41"/><g stroke="#AFB1B3" stroke-width="1.3"><path d="M11.5 7.5V15.5M7.5 11.5H15.5M8.7 8.7L14.3 14.3M14.3 8.7L8.7 14.3"/></g><circle cx="11.5" cy="11.5" r="1.3" fill="#3C3F41"/></svg><div style="position:absolute;left:61px;top:240.5px;height:20px;line-height:20px;font-size:13.85px;color:#BBBBBB;white-space:pre">java<span style="color:#8C8C8C"> (generated)</span></div><svg style="position:absolute;left:27px;top:265px;" width="8" height="10" viewBox="0 0 8 10"><path d="M2 1L6 5L2 9" fill="none" stroke="#9DA0A3" stroke-width="1.2"/></svg><svg style="position:absolute;left:42px;top:262px;" width="16" height="16" viewBox="0 0 16 16"><path d="M1 2.5H6.5L8 4H15V14H1Z" fill="#909DA7"/><rect x="9" y="8" width="7" height="8" fill="#3C3F41"/><path d="M10 9.5H15M10 11.5H15M10 13.5H15M10 15.5H15" stroke="#E8A33D" stroke-width="1.1"/></svg><div style="position:absolute;left:61px;top:260.5px;height:20px;line-height:20px;font-size:13.85px;color:#BBBBBB;white-space:pre">assets</div><svg style="position:absolute;left:27px;top:285px;" width="8" height="10" viewBox="0 0 8 10"><path d="M2 1L6 5L2 9" fill="none" stroke="#9DA0A3" stroke-width="1.2"/></svg><svg style="position:absolute;left:42px;top:282px;" width="16" height="16" viewBox="0 0 16 16"><path d="M1 2.5H6.5L8 4H15V14H1Z" fill="#909DA7"/><rect x="9" y="8" width="7" height="8" fill="#3C3F41"/><path d="M10 9.5H15M10 11.5H15M10 13.5H15M10 15.5H15" stroke="#E8A33D" stroke-width="1.1"/></svg><div style="position:absolute;left:61px;top:280.5px;height:20px;line-height:20px;font-size:13.85px;color:#BBBBBB;white-space:pre">res</div><svg style="position:absolute;left:42px;top:302px;" width="16" height="16" viewBox="0 0 16 16"><path d="M1 2.5H6.5L8 4H15V14H1Z" fill="#909DA7"/><rect x="9" y="8" width="7" height="8" fill="#3C3F41"/><path d="M10 9.5H15M10 11.5H15M10 13.5H15M10 15.5H15" stroke="#E8A33D" stroke-width="1.1"/></svg><div style="position:absolute;left:61px;top:300.5px;height:20px;line-height:20px;font-size:13.85px;color:#BBBBBB;white-space:pre">res<span style="color:#8C8C8C"> (generated)</span></div><svg style="position:absolute;left:7px;top:326px;" width="10" height="8" viewBox="0 0 10 8"><path d="M1 2L5 6L9 2" fill="none" stroke="#9DA0A3" stroke-width="1.2"/></svg><svg style="position:absolute;left:23px;top:322px;" width="16" height="16" viewBox="0 0 16 16"><path d="M1.2 13.5V9.2C1.2 6.6 3 5 5.5 5H10.2C11.9 5 12.9 6.3 13 8L13.1 9.6L11.8 11.2V13.5H10.1L9.7 11.8H8.1L7.7 13.5H6.1L5.7 11.8H4.4L4.1 13.5Z" fill="#909DA7"/><path d="M11.5 10C13.8 9 14.9 7 14.9 4.6C14.9 3.1 13.9 2.5 12.6 2.9" fill="none" stroke="#909DA7" stroke-width="1.7"/><path d="M5.5 8.2L7 7.6" stroke="#3C3F41" stroke-width="0.9"/></svg><div style="position:absolute;left:43.5px;top:320.5px;height:20px;line-height:20px;font-size:13.85px;color:#BBBBBB;white-space:pre">Gradle Scripts</div><svg style="position:absolute;left:42px;top:342px;" width="16" height="16" viewBox="0 0 16 16"><path d="M1.2 13.5V9.2C1.2 6.6 3 5 5.5 5H10.2C11.9 5 12.9 6.3 13 8L13.1 9.6L11.8 11.2V13.5H10.1L9.7 11.8H8.1L7.7 13.5H6.1L5.7 11.8H4.4L4.1 13.5Z" fill="#909DA7"/><path d="M11.5 10C13.8 9 14.9 7 14.9 4.6C14.9 3.1 13.9 2.5 12.6 2.9" fill="none" stroke="#909DA7" stroke-width="1.7"/><path d="M5.5 8.2L7 7.6" stroke="#3C3F41" stroke-width="0.9"/></svg><div style="position:absolute;left:61.5px;top:340.5px;height:20px;line-height:20px;font-size:13.85px;color:#BBBBBB;white-space:pre">build.gradle<span style="color:#8C8C8C"> (Project: ChamomileApp)</span></div><svg style="position:absolute;left:42px;top:362px;" width="16" height="16" viewBox="0 0 16 16"><path d="M1.2 13.5V9.2C1.2 6.6 3 5 5.5 5H10.2C11.9 5 12.9 6.3 13 8L13.1 9.6L11.8 11.2V13.5H10.1L9.7 11.8H8.1L7.7 13.5H6.1L5.7 11.8H4.4L4.1 13.5Z" fill="#909DA7"/><path d="M11.5 10C13.8 9 14.9 7 14.9 4.6C14.9 3.1 13.9 2.5 12.6 2.9" fill="none" stroke="#909DA7" stroke-width="1.7"/><path d="M5.5 8.2L7 7.6" stroke="#3C3F41" stroke-width="0.9"/></svg><div style="position:absolute;left:61.5px;top:360.5px;height:20px;line-height:20px;font-size:13.85px;color:#BBBBBB;white-space:pre">build.gradle<span style="color:#8C8C8C"> (Module :app)</span></div><svg style="position:absolute;left:42px;top:382px;" width="16" height="16" viewBox="0 0 16 16"><path d="M6 1H13V15H3V4Z" fill="#909DA7"/><path d="M3 4H6V1" fill="#3C3F41"/><path d="M5.5 6.8H11M5.5 9.6H11M5.5 12.4H11" stroke="#3C3F41" stroke-width="1.2"/></svg><div style="position:absolute;left:61.5px;top:380.5px;height:20px;line-height:20px;font-size:13.85px;color:#BBBBBB;white-space:pre">proguard-rules.pro<span style="color:#8C8C8C"> (ProGuard Rules for ChamomileApp)</span></div><svg style="position:absolute;left:42px;top:402px;" width="16" height="16" viewBox="0 0 16 16"><path d="M5 1H11V15H3V3Z" fill="#909DA7"/><path d="M3 3.5H5.5V1" fill="#3C3F41"/><rect x="7" y="7" width="9" height="9" fill="#3C3F41"/><rect x="7.5" y="11" width="2" height="5" fill="#F26522"/><rect x="10.5" y="9" width="2" height="7" fill="#F4AF3D"/><rect x="13.5" y="7" width="2" height="9" fill="#3CB54A"/></svg><div style="position:absolute;left:61.5px;top:400.5px;height:20px;line-height:20px;font-size:13.85px;color:#BBBBBB;white-space:pre">gradle.properties<span style="color:#8C8C8C"> (Project Properties)</span></div><svg style="position:absolute;left:42px;top:422px;" width="16" height="16" viewBox="0 0 16 16"><path d="M5 1H11V15H3V3Z" fill="#909DA7"/><path d="M3 3.5H5.5V1" fill="#3C3F41"/><rect x="7" y="7" width="9" height="9" fill="#3C3F41"/><rect x="7.5" y="11" width="2" height="5" fill="#F26522"/><rect x="10.5" y="9" width="2" height="7" fill="#F4AF3D"/><rect x="13.5" y="7" width="2" height="9" fill="#3CB54A"/></svg><div style="position:absolute;left:61.5px;top:420.5px;height:20px;line-height:20px;font-size:13.85px;color:#BBBBBB;white-space:pre">gradle-wrapper.properties<span style="color:#8C8C8C"> (Gradle Version)</span></div><svg style="position:absolute;left:42px;top:442px;" width="16" height="16" viewBox="0 0 16 16"><path d="M5 1H11V15H3V3Z" fill="#909DA7"/><path d="M3 3.5H5.5V1" fill="#3C3F41"/><rect x="7" y="7" width="9" height="9" fill="#3C3F41"/><rect x="7.5" y="11" width="2" height="5" fill="#F26522"/><rect x="10.5" y="9" width="2" height="7" fill="#F4AF3D"/><rect x="13.5" y="7" width="2" height="9" fill="#3CB54A"/></svg><div style="position:absolute;left:61.5px;top:440.5px;height:20px;line-height:20px;font-size:13.85px;color:#BBBBBB;white-space:pre">local.properties<span style="color:#8C8C8C"> (SDK Location)</span></div><svg style="position:absolute;left:42px;top:462px;" width="16" height="16" viewBox="0 0 16 16"><path d="M1.2 13.5V9.2C1.2 6.6 3 5 5.5 5H10.2C11.9 5 12.9 6.3 13 8L13.1 9.6L11.8 11.2V13.5H10.1L9.7 11.8H8.1L7.7 13.5H6.1L5.7 11.8H4.4L4.1 13.5Z" fill="#909DA7"/><path d="M11.5 10C13.8 9 14.9 7 14.9 4.6C14.9 3.1 13.9 2.5 12.6 2.9" fill="none" stroke="#909DA7" stroke-width="1.7"/><path d="M5.5 8.2L7 7.6" stroke="#3C3F41" stroke-width="0.9"/></svg><div style="position:absolute;left:61.5px;top:460.5px;height:20px;line-height:20px;font-size:13.85px;color:#BBBBBB;white-space:pre">settings.gradle<span style="color:#8C8C8C"> (Project Settings)</span></div></div><div style="position:absolute;left:22px;top:812px;width:223px;height:8px;border-radius:4px;background:#5A5D5F"></div><div style="position:absolute;left:813px;top:48px;width:127px;height:24px;background:#4E5254;"></div><div style="position:absolute;left:813px;top:72px;width:127px;height:3px;background:#4A88C7;"></div><svg style="position:absolute;left:313px;top:53px;" width="16" height="16" viewBox="0 0 16 16"><path d="M1.2 13.5V9.2C1.2 6.6 3 5 5.5 5H10.2C11.9 5 12.9 6.3 13 8L13.1 9.6L11.8 11.2V13.5H10.1L9.7 11.8H8.1L7.7 13.5H6.1L5.7 11.8H4.4L4.1 13.5Z" fill="#909DA7"/><path d="M11.5 10C13.8 9 14.9 7 14.9 4.6C14.9 3.1 13.9 2.5 12.6 2.9" fill="none" stroke="#909DA7" stroke-width="1.7"/><path d="M5.5 8.2L7 7.6" stroke="#3C3F41" stroke-width="0.9"/></svg><div style="position:absolute;left:333px;top:51.00px;height:20px;line-height:20px;font-family:'Liberation Sans', sans-serif;font-size:11.8px;font-weight:400;color:#BBBBBB;white-space:pre;">build.gradle (:app)</div><svg style="position:absolute;left:436.5px;top:57.5px;" width="8" height="8" viewBox="0 0 8 8"><path d="M0.5 0.5L7.5 7.5M7.5 0.5L0.5 7.5" stroke="#6E7173" stroke-width="1.1"/></svg><svg style="position:absolute;left:459px;top:53px;" width="16" height="16" viewBox="0 0 16 16"><path d="M1.2 13.5V9.2C1.2 6.6 3 5 5.5 5H10.2C11.9 5 12.9 6.3 13 8L13.1 9.6L11.8 11.2V13.5H10.1L9.7 11.8H8.1L7.7 13.5H6.1L5.7 11.8H4.4L4.1 13.5Z" fill="#909DA7"/><path d="M11.5 10C13.8 9 14.9 7 14.9 4.6C14.9 3.1 13.9 2.5 12.6 2.9" fill="none" stroke="#909DA7" stroke-width="1.7"/><path d="M5.5 8.2L7 7.6" stroke="#3C3F41" stroke-width="0.9"/></svg><div style="position:absolute;left:479.5px;top:51.00px;height:20px;line-height:20px;font-family:'Liberation Sans', sans-serif;font-size:11.8px;font-weight:400;color:#BBBBBB;white-space:pre;">build.gradle (ChamomileApp)</div><svg style="position:absolute;left:641px;top:57.5px;" width="8" height="8" viewBox="0 0 8 8"><path d="M0.5 0.5L7.5 7.5M7.5 0.5L0.5 7.5" stroke="#6E7173" stroke-width="1.1"/></svg><svg style="position:absolute;left:663px;top:53px;" width="16" height="16" viewBox="0 0 16 16"><path d="M5 1H11V8H2V4Z" fill="#909DA7"/><path d="M2 4H5V1" fill="#3C3F41"/><rect x="0" y="8.5" width="16" height="7.5" fill="#3A9A5E"/><text x="8" y="15" text-anchor="middle" font-family="Liberation Sans" font-size="7" font-weight="700" fill="#1E3A24">MF</text></svg><div style="position:absolute;left:683px;top:51.00px;height:20px;line-height:20px;font-family:'Liberation Sans', sans-serif;font-size:11.8px;font-weight:400;color:#BBBBBB;white-space:pre;">AndroidManifest.xml</div><svg style="position:absolute;left:799.5px;top:57.5px;" width="8" height="8" viewBox="0 0 8 8"><path d="M0.5 0.5L7.5 7.5M7.5 0.5L0.5 7.5" stroke="#6E7173" stroke-width="1.1"/></svg><svg style="position:absolute;left:821.5px;top:53px;" width="17" height="17" viewBox="0 0 17 17"><circle cx="8" cy="7.5" r="7" fill="#3A8BB0"/><path d="M10.5 5.2A3.2 3.2 0 1 0 10.5 9.8" fill="none" stroke="#4E5254" stroke-width="1.5"/><path d="M8.2 7.8H17L13.4 11.9L17 16.2H8.2Z" fill="#4E5254"/><path d="M9 8.6H16L12.4 11.9L16 15.4H9Z" fill="#C7A4F5"/></svg><div style="position:absolute;left:841.5px;top:51.00px;height:20px;line-height:20px;font-family:'Liberation Sans', sans-serif;font-size:12.1px;font-weight:400;color:#BBBBBB;white-space:pre;">MainActivity.kt</div><svg style="position:absolute;left:925px;top:57.5px;" width="8" height="8" viewBox="0 0 8 8"><path d="M0.5 0.5L7.5 7.5M7.5 0.5L0.5 7.5" stroke="#6E7173" stroke-width="1.1"/></svg><svg style="position:absolute;left:947px;top:53px;" width="16" height="16" viewBox="0 0 16 16"><path d="M5 1H14V8H2V4Z" fill="#909DA7"/><path d="M2 4H5V1" fill="#3C3F41"/><rect x="1" y="8.5" width="15" height="7.5" fill="#4E9A3E"/><text x="5" y="15" text-anchor="middle" font-family="Liberation Sans" font-size="7" font-weight="700" fill="#1E3A24">H</text></svg><div style="position:absolute;left:967px;top:51.00px;height:20px;line-height:20px;font-family:'Liberation Sans', sans-serif;font-size:12.4px;font-weight:400;color:#BBBBBB;white-space:pre;">notification.html</div><svg style="position:absolute;left:1063px;top:57.5px;" width="8" height="8" viewBox="0 0 8 8"><path d="M0.5 0.5L7.5 7.5M7.5 0.5L0.5 7.5" stroke="#6E7173" stroke-width="1.1"/></svg><svg style="position:absolute;left:1082.5px;top:53px;" width="17" height="17" viewBox="0 0 17 17"><circle cx="8" cy="7.5" r="7" fill="#C7943F"/><path d="M10.5 5.2A3.2 3.2 0 1 0 10.5 9.8" fill="none" stroke="#3C3F41" stroke-width="1.5"/><path d="M8.2 7.8H17L13.4 11.9L17 16.2H8.2Z" fill="#3C3F41"/><path d="M9 8.6H16L12.4 11.9L16 15.4H9Z" fill="#C7A4F5"/></svg><div style="position:absolute;left:1103px;top:51.00px;height:20px;line-height:20px;font-family:'Liberation Sans', sans-serif;font-size:12.0px;font-weight:400;color:#BBBBBB;white-space:pre;">NotiCompatModule.kt</div><svg style="position:absolute;left:1228px;top:57.5px;" width="8" height="8" viewBox="0 0 8 8"><path d="M0.5 0.5L7.5 7.5M7.5 0.5L0.5 7.5" stroke="#6E7173" stroke-width="1.1"/></svg><svg style="position:absolute;left:1249.5px;top:53px;" width="17" height="17" viewBox="0 0 17 17"><circle cx="8" cy="7.5" r="7" fill="#C7943F"/><path d="M10.5 5.2A3.2 3.2 0 1 0 10.5 9.8" fill="none" stroke="#3C3F41" stroke-width="1.5"/><path d="M8.2 7.8H17L13.4 11.9L17 16.2H8.2Z" fill="#3C3F41"/><path d="M9 8.6H16L12.4 11.9L16 15.4H9Z" fill="#C7A4F5"/></svg><div style="position:absolute;left:1268px;top:51.00px;height:20px;line-height:20px;font-family:'Liberation Sans', sans-serif;font-size:12.6px;font-weight:400;color:#BBBBBB;white-space:pre;">Utils.kt</div><svg style="position:absolute;left:1314px;top:57.5px;" width="8" height="8" viewBox="0 0 8 8"><path d="M0.5 0.5L7.5 7.5M7.5 0.5L0.5 7.5" stroke="#6E7173" stroke-width="1.1"/></svg><svg style="position:absolute;left:1362px;top:54px;" width="4" height="14" viewBox="0 0 4 14"><circle cx="2" cy="2" r="1.3" fill="#AFB1B3"/><circle cx="2" cy="7" r="1.3" fill="#AFB1B3"/><circle cx="2" cy="12" r="1.3" fill="#AFB1B3"/></svg><div style="position:absolute;left:10px;top:23.50px;height:20px;line-height:20px;font-family:'Liberation Sans', sans-serif;font-size:12.5px;font-weight:700;color:#BBBBBB;white-space:pre;">ChamomileAppKakao</div><div style="position:absolute;left:153px;top:23.50px;height:20px;line-height:20px;font-family:'Liberation Sans', sans-serif;font-size:12.5px;font-weight:700;color:#BBBBBB;white-space:pre;">app</div><div style="position:absolute;left:190px;top:23.50px;height:20px;line-height:20px;font-family:'Liberation Sans', sans-serif;font-size:12.5px;font-weight:400;color:#BBBBBB;white-space:pre;">src</div><div style="position:absolute;left:222px;top:23.50px;height:20px;line-height:20px;font-family:'Liberation Sans', sans-serif;font-size:12.5px;font-weight:700;color:#BBBBBB;white-space:pre;">main</div><div style="position:absolute;left:264px;top:23.50px;height:20px;line-height:20px;font-family:'Liberation Sans', sans-serif;font-size:12.5px;font-weight:400;color:#BBBBBB;white-space:pre;">java</div><div style="position:absolute;left:302px;top:23.50px;height:20px;line-height:20px;font-family:'Liberation Sans', sans-serif;font-size:12.5px;font-weight:400;color:#BBBBBB;white-space:pre;">com</div><div style="position:absolute;left:340px;top:23.50px;height:20px;line-height:20px;font-family:'Liberation Sans', sans-serif;font-size:12.5px;font-weight:400;color:#BBBBBB;white-space:pre;">ldcc</div><div style="position:absolute;left:378.3px;top:23.50px;height:20px;line-height:20px;font-family:'Liberation Sans', sans-serif;font-size:12.5px;font-weight:400;color:#BBBBBB;white-space:pre;">chamomileapp</div><div style="position:absolute;left:490.7px;top:23.50px;height:20px;line-height:20px;font-family:'Liberation Sans', sans-serif;font-size:12.5px;font-weight:400;color:#BBBBBB;white-space:pre;">MainActivity</div><div style="position:absolute;left:590px;top:23.50px;height:20px;line-height:20px;font-family:'Liberation Sans', sans-serif;font-size:12.5px;font-weight:400;color:#BBBBBB;white-space:pre;">setFlexWebView</div><svg style="position:absolute;left:141px;top:26px;" width="6" height="15" viewBox="0 0 6 15"><path d="M0.7 0.5L4.8 7.5L0.7 14.5" fill="none" stroke="#6E7173" stroke-width="1"/></svg><svg style="position:absolute;left:179px;top:26px;" width="6" height="15" viewBox="0 0 6 15"><path d="M0.7 0.5L4.8 7.5L0.7 14.5" fill="none" stroke="#6E7173" stroke-width="1"/></svg><svg style="position:absolute;left:211px;top:26px;" width="6" height="15" viewBox="0 0 6 15"><path d="M0.7 0.5L4.8 7.5L0.7 14.5" fill="none" stroke="#6E7173" stroke-width="1"/></svg><svg style="position:absolute;left:253px;top:26px;" width="6" height="15" viewBox="0 0 6 15"><path d="M0.7 0.5L4.8 7.5L0.7 14.5" fill="none" stroke="#6E7173" stroke-width="1"/></svg><svg style="position:absolute;left:290px;top:26px;" width="6" height="15" viewBox="0 0 6 15"><path d="M0.7 0.5L4.8 7.5L0.7 14.5" fill="none" stroke="#6E7173" stroke-width="1"/></svg><svg style="position:absolute;left:330px;top:26px;" width="6" height="15" viewBox="0 0 6 15"><path d="M0.7 0.5L4.8 7.5L0.7 14.5" fill="none" stroke="#6E7173" stroke-width="1"/></svg><svg style="position:absolute;left:367px;top:26px;" width="6" height="15" viewBox="0 0 6 15"><path d="M0.7 0.5L4.8 7.5L0.7 14.5" fill="none" stroke="#6E7173" stroke-width="1"/></svg><svg style="position:absolute;left:463px;top:26px;" width="6" height="15" viewBox="0 0 6 15"><path d="M0.7 0.5L4.8 7.5L0.7 14.5" fill="none" stroke="#6E7173" stroke-width="1"/></svg><svg style="position:absolute;left:562px;top:26px;" width="6" height="15" viewBox="0 0 6 15"><path d="M0.7 0.5L4.8 7.5L0.7 14.5" fill="none" stroke="#6E7173" stroke-width="1"/></svg><svg style="position:absolute;left:471.5px;top:25.5px;" width="17" height="17" viewBox="0 0 17 17"><circle cx="8" cy="7.5" r="7" fill="#3A8BB0"/><path d="M10.5 5.2A3.2 3.2 0 1 0 10.5 9.8" fill="none" stroke="#3C3F41" stroke-width="1.5"/><path d="M8.2 7.8H17L13.4 11.9L17 16.2H8.2Z" fill="#3C3F41"/><path d="M9 8.6H16L12.4 11.9L16 15.4H9Z" fill="#C7A4F5"/></svg><svg style="position:absolute;left:572px;top:26px;" width="15" height="15" viewBox="0 0 15 15"><circle cx="7.5" cy="7.5" r="7" fill="#B5707E"/><text x="7.5" y="11" text-anchor="middle" font-family="Liberation Sans" font-size="10" fill="#3C3F41">m</text></svg><svg style="position:absolute;left:743px;top:26px;" width="15" height="16" viewBox="0 0 15 16"><path d="M0.5 6.2L5.5 1.4C6.6 0.5 7.8 0.4 8.8 0.8L6.3 3.6L2.2 7.6Z" fill="#C4C4C4"/><path d="M4.6 4.2L13.2 12" stroke="#C4C4C4" stroke-width="2.5"/><rect x="3.3" y="9.2" width="6.4" height="6.4" fill="#3C3F41"/><rect x="4" y="10" width="5" height="5" fill="#3592C4"/></svg><svg style="position:absolute;left:763px;top:31px;" width="8" height="5" viewBox="0 0 8 5"><path d="M0 0H8L4.0 5Z" fill="#AFB1B3"/></svg><div style="position:absolute;left:783px;top:22px;width:73px;height:21px;border:1px solid #646668;border-radius:4px"></div><svg style="position:absolute;left:793px;top:28px;" width="15" height="13" viewBox="0 0 15 13"><path d="M1 10C1 6.5 3.8 4 7 4C10.2 4 13 6.5 13 10Z" fill="#3DDC84"/><path d="M3.5 1.5L5 4.5M10.5 1.5L9 4.5" stroke="#3DDC84" stroke-width="1.1"/><circle cx="5" cy="7.3" r="0.7" fill="#3C3F41"/><circle cx="9" cy="7.3" r="0.7" fill="#3C3F41"/><circle cx="11.5" cy="10.5" r="2.6" fill="#3C3F41"/><circle cx="11.5" cy="10.5" r="1.9" fill="#29D14A"/></svg><div style="position:absolute;left:812px;top:22.80px;height:20px;line-height:20px;font-family:'Liberation Sans', sans-serif;font-size:12px;font-weight:400;color:#BBBBBB;white-space:pre;">app</div><svg style="position:absolute;left:839.5px;top:31px;" width="9" height="5" viewBox="0 0 9 5"><path d="M0 0H9L4.5 5Z" fill="#AFB1B3"/></svg><div style="position:absolute;left:864px;top:22px;width:159px;height:21px;border:1px solid #646668;border-radius:4px"></div><svg style="position:absolute;left:876px;top:27px;" width="12" height="14" viewBox="0 0 12 14"><rect x="1" y="0.8" width="8" height="11.5" rx="1" fill="none" stroke="#AFB1B3" stroke-width="1.3"/><circle cx="9.5" cy="11.5" r="2.6" fill="#3C3F41"/><circle cx="9.5" cy="11.5" r="1.9" fill="#29D14A"/></svg><div style="position:absolute;left:893px;top:22.80px;height:20px;line-height:20px;font-family:'Liberation Sans', sans-serif;font-size:11.5px;font-weight:400;color:#BBBBBB;white-space:pre;">samsung SM-S901N</div><svg style="position:absolute;left:1006.5px;top:31px;" width="9" height="5" viewBox="0 0 9 5"><path d="M0 0H9L4.5 5Z" fill="#AFB1B3"/></svg><svg style="position:absolute;left:1035px;top:26px;" width="16" height="15" viewBox="0 0 16 15"><path d="M10.5 3.5H5.5A4.5 4.5 0 0 0 5.5 12.5" fill="none" stroke="#499C54" stroke-width="2"/><path d="M9.5 0L14 3.5L9.5 7Z" fill="#499C54"/><rect x="8" y="9" width="6" height="6" fill="#AFB1B3"/></svg><svg style="position:absolute;left:1060px;top:26px;" width="16" height="15" viewBox="0 0 16 15"><path d="M10.5 3.5H5.5A4.5 4.5 0 0 0 5.5 12.5" fill="none" stroke="#499C54" stroke-width="2"/><path d="M9.5 0L14 3.5L9.5 7Z" fill="#499C54"/><text x="11.5" y="15" text-anchor="middle" font-family="Liberation Sans" font-size="8" font-weight="700" fill="#AFB1B3">A</text></svg><svg style="position:absolute;left:1087px;top:26px;" width="17" height="16" viewBox="0 0 17 16"><path d="M1 3.2H12.8M1 5.9H12.8M1 9.1H7M1 11.8H9" stroke="#C4C4C4" stroke-width="1.8"/><path d="M10.5 8.6C13 8 14.8 9.5 14.5 11.5C14.2 13.3 12.5 14 11 13.6" fill="none" stroke="#499C54" stroke-width="1.3"/><path d="M9.3 8.8L11.8 6.8L11.8 10.6Z" fill="#499C54"/></svg><svg style="position:absolute;left:1113px;top:26px;" width="15" height="15" viewBox="0 0 15 15"><rect x="2.8" y="3.8" width="8.6" height="9.4" rx="3.6" fill="#499C54"/><path d="M4.3 1L6 3.8M9.9 1L8.2 3.8" stroke="#499C54" stroke-width="1.3"/><path d="M0.8 6.5H3M11.2 6.5H13.4M0.8 10.5H3M11.2 10.5H13.4" stroke="#499C54" stroke-width="1.6"/><path d="M3 7.2H11.2M3 10H11.2" stroke="#3C3F41" stroke-width="1.1"/></svg><svg style="position:absolute;left:1138px;top:27px;" width="16" height="15" viewBox="0 0 16 15"><path d="M1 3L5.5 1.2L10 3V7H7.8V12.8L1 10.5Z" fill="#5A5D5F"/><path d="M7.8 5.2L15 9.4L7.8 14Z" fill="#5A5D5F"/></svg><svg style="position:absolute;left:1165px;top:26px;" width="16" height="14" viewBox="0 0 16 14"><path d="M2.2 11.5A6 6 0 1 1 13.8 11.5" fill="none" stroke="#C4C4C4" stroke-width="2.4"/><path d="M2.2 11.5A6 6 0 0 1 3.6 5.2" fill="none" stroke="#499C54" stroke-width="2.4"/><path d="M8.3 11L5.2 5.2" stroke="#C4C4C4" stroke-width="2"/></svg><svg style="position:absolute;left:1187px;top:32px;" width="8" height="5" viewBox="0 0 8 5"><path d="M0 0H8L4.0 5Z" fill="#AFB1B3"/></svg><svg style="position:absolute;left:1206px;top:25px;" width="17" height="16" viewBox="0 0 17 16"><ellipse cx="7" cy="8.5" rx="4.2" ry="5" fill="#499C54"/><path d="M1.5 5.5L4 7M12.5 5.5L10 7M1 9.5H3.5M1.5 13.5L4 12M4.5 1.5L5.5 3.5M9.5 1.5L8.5 3.5" stroke="#499C54" stroke-width="1.3"/><rect x="9" y="9" width="8" height="7" fill="#3C3F41"/><path d="M10.5 15L15.5 10M12 10H15.5V13.5" fill="none" stroke="#AFB1B3" stroke-width="1.5"/></svg><div style="position:absolute;left:1234px;top:29px;width:10.5px;height:9.5px;background:#C75450;"></div><div style="position:absolute;left:1255px;top:24px;width:1px;height:19px;background:#515456;"></div><svg style="position:absolute;left:1264px;top:26px;" width="17" height="16" viewBox="0 0 17 16"><path d="M1.2 13V9.2C1.2 6.6 3 5 5.5 5H10.2C11.9 5 12.9 6.3 13 8L13.1 9.6L11.8 11.2V13H10.1L9.7 11.8H8.1L7.7 13H6.1L5.7 11.8H4.4L4.1 13Z" fill="#C4C4C4"/><path d="M11.5 10C13.8 9 14.9 7 14.9 4.6C14.9 3.1 13.9 2.5 12.6 2.9" fill="none" stroke="#C4C4C4" stroke-width="1.7"/><path d="M8.2 8.8V15.8H15.2L13.2 13.8L16.8 10.2L14.8 8.2L11.2 11.8Z" fill="#3C3F41"/><path d="M9 9.6V15H14.4L12.4 13L16 9.4L14.6 8L11 11.6Z" fill="#3592C4"/></svg><svg style="position:absolute;left:1292px;top:26px;" width="15" height="16" viewBox="0 0 15 16"><rect x="1.5" y="1.3" width="7.5" height="11.5" rx="1" fill="none" stroke="#C4C4C4" stroke-width="1.5"/><path d="M4 15C4 11.5 6.5 8.6 9.5 8.6C12.5 8.6 15 11.5 15 15Z" fill="#3C3F41"/><path d="M5 14.2C5 11.6 7 9.6 9.5 9.6C12 9.6 14 11.6 14 14.2Z" fill="#3DDC84"/><path d="M6.3 8.2L7.6 10.2M12.7 8.2L11.4 10.2" stroke="#3DDC84" stroke-width="1"/></svg><div style="position:absolute;left:1314px;top:24px;width:1px;height:19px;background:#515456;"></div><svg style="position:absolute;left:1324px;top:26px;" width="15" height="15" viewBox="0 0 15 15"><circle cx="6" cy="6" r="4.6" fill="none" stroke="#AFB1B3" stroke-width="1.8"/><path d="M9.5 9.5L14 14" stroke="#AFB1B3" stroke-width="2.2"/></svg><svg style="position:absolute;left:1349px;top:25px;" width="16" height="16" viewBox="0 0 16 16"><circle cx="8" cy="8" r="8" fill="#F0A732"/><path d="M8 12.5V5M4.5 8L8 4.3L11.5 8" fill="none" stroke="#FFFFFF" stroke-width="1.8"/></svg><svg style="position:absolute;left:1375px;top:25.5px;" width="16" height="16" viewBox="0 0 16 16"><circle cx="8" cy="8" r="7.4" fill="#AFB1B3"/><circle cx="8" cy="5.5" r="2.3" fill="#3C3F41"/><path d="M3.5 11C4.5 9 6 8.8 8 8.8C10 8.8 11.5 9 12.5 11C11 12.6 9.5 13 8 13C6.5 13 5 12.6 3.5 11Z" fill="#3C3F41"/></svg><div style="position:absolute;left:0px;top:186px;width:18px;height:74px;background:#2D2F31;"></div><div style="position:absolute;left:0.5px;top:154.2px;transform-origin:0 0;transform:rotate(-90deg);font-size:11.4px;font-weight:400;color:#BBBBBB;white-space:pre;line-height:16px;height:16px">Resource Manager</div><svg style="position:absolute;left:2px;top:159px;" width="14" height="13" viewBox="0 0 14 13"><path d="M8.5 0.5L11.5 5.5H5.5Z" fill="#AFB1B3"/><rect x="1" y="7" width="5" height="5" fill="#AFB1B3"/><circle cx="10.5" cy="9.5" r="2.6" fill="#AFB1B3"/></svg><div style="position:absolute;left:0.5px;top:232px;transform-origin:0 0;transform:rotate(-90deg);font-size:10.7px;font-weight:700;color:#FFFFFF;white-space:pre;line-height:16px;height:16px">Project</div><svg style="position:absolute;left:3px;top:240px;" width="12" height="9" viewBox="0 0 12 9"><path d="M0.5 0.5H11.5V8.5H3.5L0.5 6Z" fill="#BBBBBB"/></svg><div style="position:absolute;left:0.5px;top:723px;transform-origin:0 0;transform:rotate(-90deg);font-size:11.2px;font-weight:400;color:#BBBBBB;white-space:pre;line-height:16px;height:16px">Bookmarks</div><svg style="position:absolute;left:3px;top:729px;" width="11" height="13" viewBox="0 0 11 13"><path d="M1 0.8H10V12L5.5 7.5L1 12Z" fill="#BBBBBB"/></svg><div style="position:absolute;left:0.5px;top:833px;transform-origin:0 0;transform:rotate(-90deg);font-size:11.4px;font-weight:400;color:#BBBBBB;white-space:pre;line-height:16px;height:16px">Build Variants</div><svg style="position:absolute;left:2px;top:838px;" width="14" height="11" viewBox="0 0 14 11"><path d="M1 9.8C1 5.8 3.8 3.5 7 3.5C10.2 3.5 13 5.8 13 9.8Z" fill="#BBBBBB"/><path d="M2.5 0.8L4.5 4M11.5 0.8L9.5 4" stroke="#BBBBBB" stroke-width="1.2"/></svg><div style="position:absolute;left:0.5px;top:918px;transform-origin:0 0;transform:rotate(-90deg);font-size:11.2px;font-weight:400;color:#BBBBBB;white-space:pre;line-height:16px;height:16px">Structure</div><svg style="position:absolute;left:3px;top:925px;" width="12" height="11" viewBox="0 0 12 11"><rect x="5.5" y="0.8" width="4.5" height="4.5" fill="#BBBBBB"/><rect x="0.5" y="5.8" width="4.5" height="4.5" fill="#BBBBBB"/><rect x="5.5" y="5.8" width="4.5" height="4.5" fill="#BBBBBB"/></svg><div style="position:absolute;left:1396px;top:77.3px;transform-origin:0 0;transform:rotate(90deg);font-size:11.6px;font-weight:400;color:#BBBBBB;white-space:pre;line-height:16px;height:16px">Device Manager</div><svg style="position:absolute;left:1380px;top:59px;" width="15" height="15" viewBox="0 0 15 15"><rect x="1.5" y="1.5" width="7.2" height="10.8" rx="0.8" fill="none" stroke="#C4C4C4" stroke-width="1.3"/><path d="M4.5 14.5C4.5 11.5 6.7 9.2 9 9.2C11.3 9.2 13.5 11.5 13.5 14.5Z" fill="#3C3F41"/><path d="M5.2 14C5.2 11.8 7 10 9 10C11 10 12.8 11.8 12.8 14Z" fill="#C4C4C4"/><path d="M6.3 8.6L7.4 10.3M11.7 8.6L10.6 10.3" stroke="#C4C4C4" stroke-width="0.9"/></svg><div style="position:absolute;left:1396px;top:201px;transform-origin:0 0;transform:rotate(90deg);font-size:12.1px;font-weight:400;color:#BBBBBB;white-space:pre;line-height:16px;height:16px">Notifications</div><svg style="position:absolute;left:1381px;top:182px;" width="14" height="15" viewBox="0 0 14 15"><path d="M1 11.5H12L10.8 9.5V6C10.8 3.8 9 2.2 6.5 2.2C4 2.2 2.2 3.8 2.2 6V9.5Z" fill="#AFB1B3"/><path d="M4.8 12.8A1.8 1.8 0 0 0 8.2 12.8Z" fill="#AFB1B3"/><circle cx="11" cy="3" r="2.8" fill="#3C3F41"/><circle cx="11" cy="3" r="2.2" fill="#3592C4"/></svg><div style="position:absolute;left:1396px;top:305.6px;transform-origin:0 0;transform:rotate(90deg);font-size:11.4px;font-weight:400;color:#BBBBBB;white-space:pre;line-height:16px;height:16px">App Links Assistant</div><svg style="position:absolute;left:1382px;top:295px;" width="12" height="10" viewBox="0 0 12 10"><path d="M3 1H2A1.5 1.5 0 0 0 0.8 2.5V7.5A1.5 1.5 0 0 0 2 9H3M9 1H10A1.5 1.5 0 0 1 11.2 2.5V7.5A1.5 1.5 0 0 1 10 9H9M6 3V7" fill="none" stroke="#AFB1B3" stroke-width="1.3"/></svg><div style="position:absolute;left:1396px;top:451.5px;transform-origin:0 0;transform:rotate(90deg);font-size:11.2px;font-weight:400;color:#BBBBBB;white-space:pre;line-height:16px;height:16px">Gradle</div><svg style="position:absolute;left:1380px;top:434px;" width="15" height="15" viewBox="0 0 15 15"><g transform="rotate(90 7.5 7.5)"><path d="M1.2 13.5V9.2C1.2 6.6 3 5 5.5 5H10.2C11.9 5 12.9 6.3 13 8L13.1 9.6L11.8 11.2V13.5H10.1L9.7 11.8H8.1L7.7 13.5H6.1L5.7 11.8H4.4L4.1 13.5Z" fill="#AFB1B3"/><path d="M11.5 10C13.8 9 14.9 7 14.9 4.6C14.9 3.1 13.9 2.5 12.6 2.9" fill="none" stroke="#AFB1B3" stroke-width="1.7"/></g></svg><div style="position:absolute;left:1396px;top:728.2px;transform-origin:0 0;transform:rotate(90deg);font-size:11.55px;font-weight:400;color:#BBBBBB;white-space:pre;line-height:16px;height:16px">Device Explorer</div><svg style="position:absolute;left:1382px;top:710px;" width="12" height="15" viewBox="0 0 12 15"><rect x="1" y="1" width="9.2" height="13" rx="0.8" fill="#C4C4C4"/><rect x="2.3" y="2.3" width="6.6" height="7.8" fill="#3C3F41"/><rect x="4.3" y="11.3" width="2.6" height="1.1" rx="0.5" fill="#3C3F41"/></svg><div style="position:absolute;left:1396px;top:849.2px;transform-origin:0 0;transform:rotate(90deg);font-size:11.67px;font-weight:400;color:#BBBBBB;white-space:pre;line-height:16px;height:16px">Running Devices</div><svg style="position:absolute;left:1382px;top:833px;" width="12" height="15" viewBox="0 0 12 15"><path d="M1.6 12.2V1.6H8.2V5" fill="none" stroke="#C4C4C4" stroke-width="1.3"/><rect x="5.6" y="8.3" width="5.3" height="3.5" fill="#3C3F41" stroke="#C4C4C4" stroke-width="1.3"/><path d="M5 14H11.5" stroke="#C4C4C4" stroke-width="1"/></svg><div style="position:absolute;left:25.3px;top:827.50px;height:20px;line-height:20px;font-family:'Liberation Sans', sans-serif;font-size:14.3px;font-weight:400;color:#BBBBBB;white-space:pre;">Logcat:</div><div style="position:absolute;left:90.5px;top:827.50px;height:20px;line-height:20px;font-family:'Liberation Sans', sans-serif;font-size:14.1px;font-weight:400;color:#BBBBBB;white-space:pre;">Logcat</div><svg style="position:absolute;left:139.5px;top:834px;" width="8" height="8" viewBox="0 0 8 8"><path d="M0.5 0.5L7.5 7.5M7.5 0.5L0.5 7.5" stroke="#6E7173" stroke-width="1.1"/></svg><div style="position:absolute;left:78px;top:848px;width:80px;height:3px;border-radius:2px;background:#6F7B86"></div><svg style="position:absolute;left:167px;top:832px;" width="12" height="12" viewBox="0 0 12 12"><path d="M6 0.5V11.5M0.5 6H11.5" stroke="#C9C9C9" stroke-width="1.8"/></svg><svg style="position:absolute;left:1331px;top:830px;" width="15" height="15" viewBox="0 0 15 15"><g fill="#AFB1B3"><circle cx="7.5" cy="7.5" r="5"/><g stroke="#AFB1B3" stroke-width="2.6"><path d="M7.5 1V14M1 7.5H14M2.9 2.9L12.1 12.1M12.1 2.9L2.9 12.1"/></g></g><circle cx="7.5" cy="7.5" r="2.2" fill="#3C3F41"/></svg><div style="position:absolute;left:1357px;top:836px;width:13px;height:2px;background:#AFB1B3;"></div><div style="position:absolute;left:28px;top:860px;width:391px;height:24px;border:1px solid #646668;border-radius:4px"></div><svg style="position:absolute;left:44px;top:867px;" width="10" height="14" viewBox="0 0 10 14"><rect x="1" y="1" width="8" height="11.5" rx="1" fill="none" stroke="#AFB1B3" stroke-width="1.3"/></svg><div style="position:absolute;left:60px;top:862.5px;height:20px;line-height:20px;font-size:13.3px;color:#BBBBBB;white-space:pre;width:340px;overflow:hidden">samsung SM-S901N (R3CT60FTQAJ) <span style="color:#8C8C8C">Android 14, API 34</span></div><div style="position:absolute;left:392px;top:862px;width:10px;height:20px;background:linear-gradient(90deg, rgba(60,63,65,0), #3C3F41)"></div><svg style="position:absolute;left:405.5px;top:870.5px;" width="9" height="5" viewBox="0 0 9 5"><path d="M0 0H9L4.5 5Z" fill="#AFB1B3"/></svg><div style="position:absolute;left:434px;top:860px;width:910px;height:24px;border:1px solid #5E6163;border-radius:2px"></div><svg style="position:absolute;left:440px;top:865px;" width="14" height="14" viewBox="0 0 14 14"><path d="M0.5 1H10.5L6.8 6V12.5L4.2 11V6Z" fill="#AFB1B3"/><path d="M10 7.5H14L12 10Z" fill="#AFB1B3"/></svg><div style="position:absolute;left:462.5px;top:862.50px;height:20px;line-height:20px;font-family:'Liberation Sans', sans-serif;font-size:13.9px;font-weight:400;color:#787878;white-space:pre;">Press ^Space to see suggestions</div><svg style="position:absolute;left:1354px;top:864px;" width="17" height="17" viewBox="0 0 17 17"><circle cx="8.5" cy="8.5" r="6.9" fill="none" stroke="#7D8C98" stroke-width="1"/><text x="8.5" y="12.5" text-anchor="middle" font-family="Liberation Sans" font-size="10.5" fill="#8595A1" style="-webkit-text-stroke:0">?</text></svg><div class="c" style="position:absolute;left:31px;top:890.5px;height:22px;line-height:22px;font-family:'Liberation Mono', monospace;font-size:14px;-webkit-text-stroke:0.25px currentColor;color:#BCC4CD;white-space:pre"><x>2</x><x>0</x><x>2</x><x>4</x><x>-</x><x>0</x><x>5</x><x>-</x><x>3</x><x>1</x><x> </x><x>1</x><x>1</x><x>:</x><x>1</x><x>2</x><x>:</x><x>5</x><x>0</x><x>.</x><x>4</x><x>5</x><x>5</x><x> </x><x> </x><x>2</x><x>0</x><x>3</x><x>2</x><x>-</x><x>3</x><x>4</x><x>3</x><x>6</x><x> </x><x> </x><span style="color:#4DB6A1"><x>b</x><x>a</x><x>u</x><x>t</x><x>h</x><x>_</x><x>F</x><x>P</x><x>B</x><x>A</x><x>u</x><x>t</x><x>h</x><x>S</x><x>e</x><x>r</x><x>v</x><x>i</x><x>c</x><x>e</x></span><x> </x><x> </x><x> </x><x> </x><x>v</x><x>e</x><x>n</x><x>.</x><x>.</x><x>.</x><x>t</x><x>r</x><x>i</x><x>c</x><x>s</x><x>.</x><x>f</x><x>i</x><x>n</x><x>g</x><x>e</x><x>r</x><x>p</x><x>r</x><x>i</x><x>n</x><x>t</x><x>@</x><x>3</x><x>.</x><x>0</x><x>-</x><x>s</x><x>e</x><x>r</x><x>v</x><x>i</x><x>c</x><x>e</x></div><div style="position:absolute;left:799px;top:893px;width:24px;height:18px;background:#5C844C;"></div><div style="position:absolute;left:807px;top:890.5px;height:22px;line-height:22px;font-family:'Liberation Mono', monospace;font-size:14px;-webkit-text-stroke:0.25px currentColor;color:#E8E8E8;white-space:pre">I</div><div class="c" style="position:absolute;left:831px;top:890.5px;height:22px;line-height:22px;font-family:'Liberation Mono', monospace;font-size:14px;-webkit-text-stroke:0.25px currentColor;color:#BBB529;white-space:pre"><x>F</x><x>P</x><x>B</x><x>A</x><x>u</x><x>t</x><x>h</x><x>S</x><x>e</x><x>r</x><x>v</x><x>i</x><x>c</x><x>e</x><x>,</x><x> </x><x>1</x><x>1</x><x>4</x><x>5</x><x>8</x></div><div style="position:absolute;left:1366px;top:909px;width:8px;height:22px;border-radius:4px;background:#5A5D5F"></div><div style="position:absolute;left:34px;top:937px;width:76px;height:8px;border-radius:4px;background:#5A5D5F"></div><div style="position:absolute;left:419px;top:949px;width:72px;height:20px;background:#2D2F30;"></div><div style="position:absolute;left:48.2px;top:949.00px;height:20px;line-height:20px;font-family:'Liberation Sans', sans-serif;font-size:11.75px;font-weight:400;color:#BBBBBB;white-space:pre;">Version Control</div><div style="position:absolute;left:165.4px;top:949.00px;height:20px;line-height:20px;font-family:'Liberation Sans', sans-serif;font-size:11.75px;font-weight:400;color:#BBBBBB;white-space:pre;">Run</div><div style="position:absolute;left:221.6px;top:949.00px;height:20px;line-height:20px;font-family:'Liberation Sans', sans-serif;font-size:11.75px;font-weight:400;color:#BBBBBB;white-space:pre;">Profiler</div><div style="position:absolute;left:299.4px;top:949.00px;height:20px;line-height:20px;font-family:'Liberation Sans', sans-serif;font-size:11.75px;font-weight:400;color:#BBBBBB;white-space:pre;">App Quality Insights</div><div style="position:absolute;left:446.3px;top:949.00px;height:20px;line-height:20px;font-family:'Liberation Sans', sans-serif;font-size:10.7px;font-weight:700;color:#FFFFFF;white-space:pre;">Logcat</div><div style="position:absolute;left:517.8px;top:949.00px;height:20px;line-height:20px;font-family:'Liberation Sans', sans-serif;font-size:11.75px;font-weight:400;color:#BBBBBB;white-space:pre;">Build</div><div style="position:absolute;left:579.9px;top:949.00px;height:20px;line-height:20px;font-family:'Liberation Sans', sans-serif;font-size:11.75px;font-weight:400;color:#BBBBBB;white-space:pre;">TODO</div><div style="position:absolute;left:651.4px;top:949.00px;height:20px;line-height:20px;font-family:'Liberation Sans', sans-serif;font-size:11.75px;font-weight:400;color:#BBBBBB;white-space:pre;">Problems</div><div style="position:absolute;left:739.2px;top:949.00px;height:20px;line-height:20px;font-family:'Liberation Sans', sans-serif;font-size:11.75px;font-weight:400;color:#BBBBBB;white-space:pre;">Terminal</div><div style="position:absolute;left:821px;top:949.00px;height:20px;line-height:20px;font-family:'Liberation Sans', sans-serif;font-size:11.75px;font-weight:400;color:#BBBBBB;white-space:pre;">Services</div><div style="position:absolute;left:905.4px;top:949.00px;height:20px;line-height:20px;font-family:'Liberation Sans', sans-serif;font-size:11.75px;font-weight:400;color:#BBBBBB;white-space:pre;">App Inspection</div><div style="position:absolute;left:1278.4px;top:949.00px;height:20px;line-height:20px;font-family:'Liberation Sans', sans-serif;font-size:11.75px;font-weight:400;color:#BBBBBB;white-space:pre;">Layout Inspector</div><svg style="position:absolute;left:32px;top:953px;" width="11" height="12" viewBox="0 0 11 12"><circle cx="2.5" cy="2" r="1.6" fill="#AFB1B3"/><circle cx="9" cy="2" r="1.6" fill="#AFB1B3"/><path d="M2.5 2V11.5M9 2C9 6 2.5 6 2.5 9" fill="none" stroke="#AFB1B3" stroke-width="1.5"/></svg><svg style="position:absolute;left:149px;top:952px;" width="13" height="14" viewBox="0 0 13 14"><path d="M1 1L10 6.5L1 12Z" fill="#AFB1B3"/><circle cx="9.5" cy="11" r="2.7" fill="#3C3F41"/><circle cx="9.5" cy="11" r="2" fill="#29D14A"/></svg><svg style="position:absolute;left:204px;top:952px;" width="14" height="13" viewBox="0 0 14 13"><path d="M1.5 11A5.5 5.5 0 0 1 12.5 11" fill="none" stroke="#AFB1B3" stroke-width="1.8"/><path d="M6.5 11L10 5" stroke="#AFB1B3" stroke-width="1.6"/></svg><svg style="position:absolute;left:282px;top:952px;" width="14" height="14" viewBox="0 0 14 14"><path d="M3.5 1.5H10.5L13 5L7 12.5L1 5Z M1 5H13M5 1.5L4.5 5L7 12.5L9.5 5L9 1.5" fill="none" stroke="#AFB1B3" stroke-width="1.2"/></svg><svg style="position:absolute;left:428px;top:953px;" width="12" height="12" viewBox="0 0 12 12"><path d="M0.5 2.5H11M0.5 6H8M0.5 9.5H11" stroke="#FFFFFF" stroke-width="1.5"/></svg><svg style="position:absolute;left:501px;top:952px;" width="14" height="14" viewBox="0 0 14 14"><path d="M1.5 4L5 1L8 2.5L6.8 4L12.5 11L11 12.5L5 5.5L3.5 6.5Z" fill="#AFB1B3"/></svg><svg style="position:absolute;left:565px;top:953px;" width="11" height="12" viewBox="0 0 11 12"><path d="M0.5 2H2M0.5 5.5H2M0.5 9H2M3.5 2H10.5M3.5 5.5H10.5M3.5 9H10.5" stroke="#AFB1B3" stroke-width="1.4"/></svg><svg style="position:absolute;left:635px;top:952px;" width="12" height="13" viewBox="0 0 12 13"><circle cx="6" cy="6.5" r="5.5" fill="#AFB1B3"/><path d="M6 3V7.3" stroke="#3C3F41" stroke-width="1.5"/><circle cx="6" cy="9.3" r="0.9" fill="#3C3F41"/></svg><svg style="position:absolute;left:722px;top:953px;" width="13" height="12" viewBox="0 0 13 12"><rect x="0" y="0" width="12.5" height="12" fill="#AFB1B3"/><path d="M2.5 3L5.5 5.5L2.5 8M6.5 9H10" fill="none" stroke="#3C3F41" stroke-width="1.3"/></svg><svg style="position:absolute;left:804px;top:952px;" width="13" height="14" viewBox="0 0 13 14"><path d="M4 1H9L12.5 7L9 13H4L0.5 7Z" fill="#AFB1B3"/><path d="M5 4.5L9 7L5 9.5Z" fill="#3C3F41"/></svg><svg style="position:absolute;left:888px;top:952px;" width="13" height="14" viewBox="0 0 13 14"><path d="M3.5 2C3.5 1 9.5 1 9.5 2V4H11V6H9.5V8H11V10H9.5C9.5 12 8 13 6.5 13C5 13 3.5 12 3.5 10H2V8H3.5V6H2V4H3.5Z" fill="#AFB1B3"/></svg><svg style="position:absolute;left:1261px;top:952px;" width="14" height="14" viewBox="0 0 14 14"><path d="M1 10V1H10M3 12V3H12" fill="none" stroke="#AFB1B3" stroke-width="1.1"/><circle cx="8.5" cy="8.5" r="2.7" fill="#3C3F41" stroke="#AFB1B3" stroke-width="1.3"/><path d="M10.5 10.5L13 13" stroke="#AFB1B3" stroke-width="1.5"/></svg><svg style="position:absolute;left:9.5px;top:974px;" width="14" height="12" viewBox="0 0 14 12"><rect x="3.5" y="0.6" width="9.5" height="8.5" fill="none" stroke="#AFB1B3" stroke-width="1.1"/><path d="M1 3V11.2H10.5" fill="none" stroke="#AFB1B3" stroke-width="1.1"/></svg><div style="position:absolute;left:41px;top:970px;width:1123px;height:18px;overflow:hidden"><div style="position:absolute;left:0.1px;top:0.00px;height:20px;line-height:20px;font-family:'Liberation Sans', sans-serif;font-size:11.74px;font-weight:400;color:#BBBBBB;white-space:pre;">Project update recommended: Android Gradle plugin version 7.1.0 has an upgrade available.  Start the AGP Upgrade Assistant to update this project&#x27;s AGP version. // Start AGP Upgrade Assistant // R... (7 minutes ago</div></div><div style="position:absolute;left:1198.6px;top:970.00px;height:20px;line-height:20px;font-family:'Liberation Sans', sans-serif;font-size:11.75px;font-weight:400;color:#BBBBBB;white-space:pre;">LF</div><div style="position:absolute;left:1222.6px;top:970.00px;height:20px;line-height:20px;font-family:'Liberation Sans', sans-serif;font-size:11.75px;font-weight:400;color:#BBBBBB;white-space:pre;">UTF-8</div><svg style="position:absolute;left:1266px;top:973px;" width="14" height="13" viewBox="0 0 14 13"><path d="M1 0.5H13V9.5H7.5L4.5 12.5V9.5H1Z" fill="#AFB1B3"/><path d="M7 2.5V6M7 7.3V8.2" stroke="#3C3F41" stroke-width="1.3"/></svg><div style="position:absolute;left:1291px;top:970.00px;height:20px;line-height:20px;font-family:'Liberation Sans', sans-serif;font-size:11.75px;font-weight:400;color:#BBBBBB;white-space:pre;">4 spaces</div><svg style="position:absolute;left:1348px;top:973px;" width="14" height="14" viewBox="0 0 14 14"><path d="M2 6V4A2.5 2.5 0 0 1 7 4" fill="none" stroke="#AFB1B3" stroke-width="1.4"/><rect x="4.5" y="7" width="8.5" height="6.5" fill="#AFB1B3"/></svg><svg style="position:absolute;left:1373px;top:973px;" width="14" height="14" viewBox="0 0 14 14"><circle cx="6.5" cy="7" r="6" fill="#5A5D5F"/><path d="M6.5 3.5V7.8" stroke="#3C3F41" stroke-width="1.5"/><circle cx="6.5" cy="10" r="0.9" fill="#3C3F41"/></svg><div style="position:absolute;left:353px;top:802px;width:2px;height:21px;background:#5A8A7E;"></div><svg style="position:absolute;left:377px;top:802px;" width="12" height="16" viewBox="0 0 12 16"><path d="M6 0.8A5.2 5.2 0 0 1 11.2 6C11.2 8 10 9.2 9 10.2V11H3V10.2C2 9.2 0.8 8 0.8 6A5.2 5.2 0 0 1 6 0.8Z" fill="#F0A732"/><path d="M3.2 12.5H8.8M3.8 14.8H8.2" stroke="#CFCFCF" stroke-width="1.3"/></svg><svg style="position:absolute;left:331px;top:167px;" width="18" height="18" viewBox="0 0 18 18"><path d="M5 0.5H12V7.5H2V3.5Z" fill="#909DA7"/><path d="M2 3.5H5V0.5" fill="#313335"/><rect x="0.5" y="9" width="17" height="8.5" fill="#CC5E1F"/><path d="M6.5 10.8L4 13.2L6.5 15.6M11.5 10.8L14 13.2L11.5 15.6" fill="none" stroke="#3A2A1E" stroke-width="1.2"/></svg><svg style="position:absolute;left:333px;top:255px;" width="17" height="16" viewBox="0 0 17 16"><circle cx="5.5" cy="8.5" r="4.8" fill="none" stroke="#3D9FC6" stroke-width="2"/><circle cx="5.5" cy="8.5" r="1.4" fill="#3D9FC6"/><path d="M13 15.5V3" stroke="#C75450" stroke-width="1.8"/><path d="M10 5L13 1L16 5Z" fill="#C75450"/></svg><div style="position:absolute;left:1366px;top:244px;width:8px;height:299px;border-radius:4px;background:#4A4A4A"></div><div style="position:absolute;left:1362px;top:350px;width:15px;height:2px;background:#C9A22A;"></div><div style="position:absolute;left:1362px;top:475px;width:15px;height:2px;background:#C9A22A;"></div><div style="position:absolute;left:1362px;top:502px;width:15px;height:2px;background:#C9A22A;"></div><div style="position:absolute;left:1362px;top:635px;width:15px;height:2px;background:#C9A22A;"></div><svg style="position:absolute;left:1277px;top:81px;" width="13" height="12" viewBox="0 0 13 12"><path d="M6.5 0.5L12.5 11.5H0.5Z" fill="#E0A91E"/><path d="M6.5 3.8V7.6M6.5 8.8V10" stroke="#2B2B2B" stroke-width="1.5"/></svg><div style="position:absolute;left:1292px;top:78.00px;height:20px;line-height:20px;font-family:'Liberation Sans', sans-serif;font-size:12.5px;font-weight:400;color:#BBBBBB;white-space:pre;">6</div><svg style="position:absolute;left:1306px;top:80px;" width="14" height="15" viewBox="0 0 14 15"><path d="M1.5 6L5 9.5L12.5 1.5" fill="none" stroke="#499C54" stroke-width="2.4"/><path d="M1 13.5L3 11.8L5 13.5L7 11.8L9 13.5L11 11.8L13 13.5" fill="none" stroke="#499C54" stroke-width="1"/></svg><div style="position:absolute;left:1322px;top:78.00px;height:20px;line-height:20px;font-family:'Liberation Sans', sans-serif;font-size:12.5px;font-weight:400;color:#BBBBBB;white-space:pre;">3</div><svg style="position:absolute;left:1339px;top:84px;" width="10" height="7" viewBox="0 0 10 7"><path d="M1 6L5 1.5L9 6" fill="none" stroke="#BBBBBB" stroke-width="1.3"/></svg><svg style="position:absolute;left:1360px;top:85px;" width="10" height="7" viewBox="0 0 10 7"><path d="M1 1L5 5.5L9 1" fill="none" stroke="#BBBBBB" stroke-width="1.3"/></svg><svg style="position:absolute;left:1371px;top:974px;z-index:60" width="30" height="14" viewBox="0 0 30 14"><path d="M26.5 0A20.5 20.5 0 0 1 20.7 14.5H30V0Z" fill="#1E0E44"/><path d="M26 0A20 20 0 0 1 20.3 14" fill="none" stroke="#6B6B6B" stroke-width="1"/><path d="M27 0A21 21 0 0 1 21.2 14" fill="none" stroke="#0A0A0C" stroke-width="1"/></svg>
</body></html>
